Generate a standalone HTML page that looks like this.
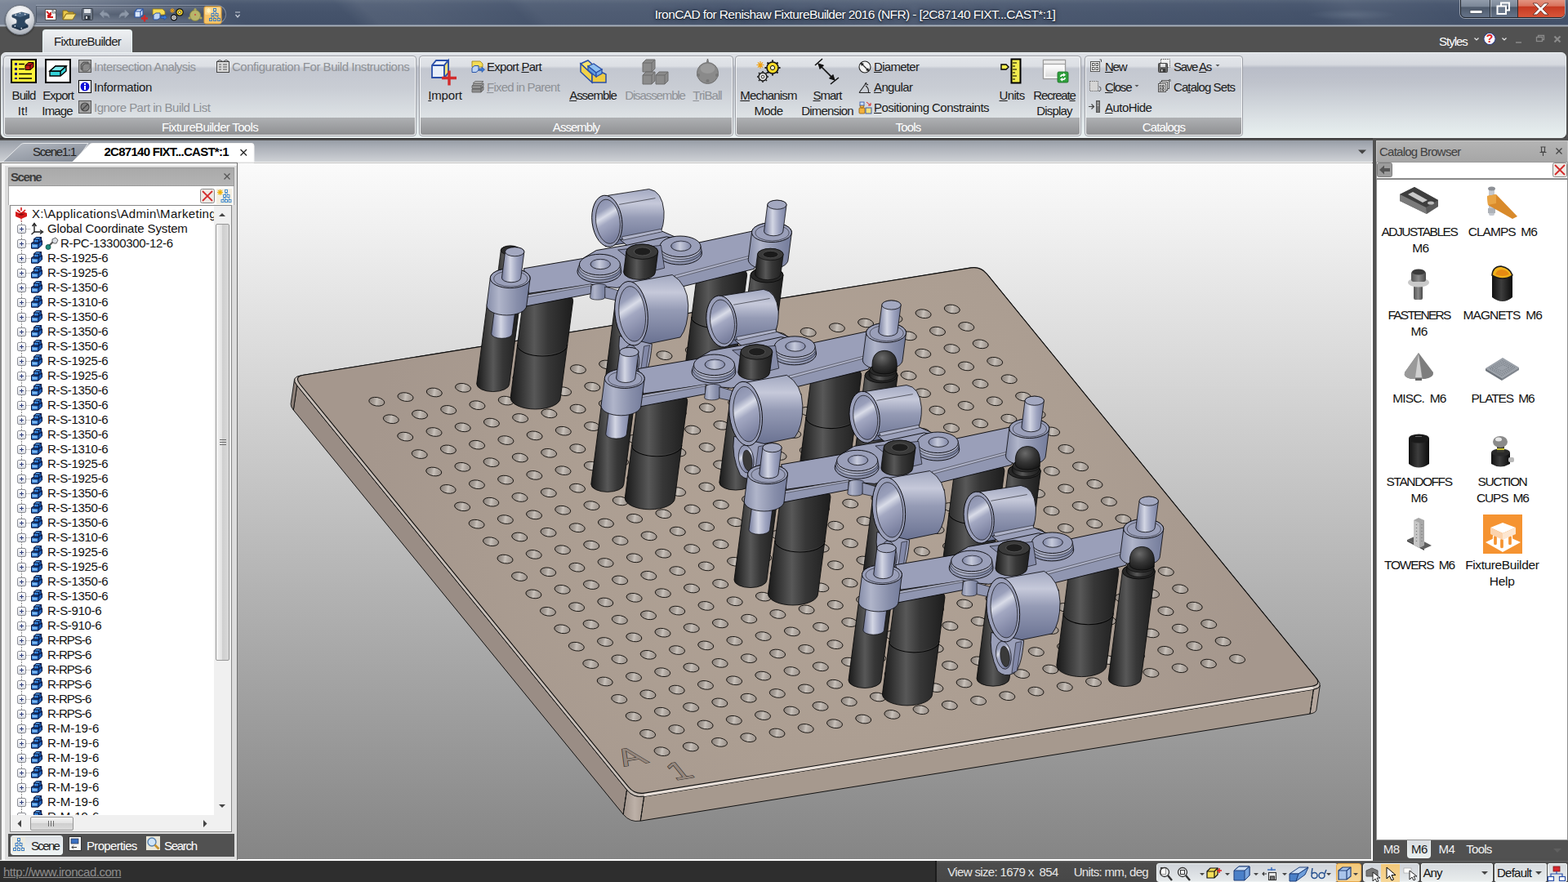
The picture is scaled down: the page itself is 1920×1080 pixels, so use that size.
<!DOCTYPE html>
<html lang="en"><head><meta charset="utf-8"><title>IronCAD for Renishaw FixtureBuilder 2016 (NFR) - [2C87140 FIXT...CAST*:1]</title>
<style>
*{box-sizing:border-box;margin:0;padding:0}
html,body{width:1920px;height:1080px;overflow:hidden}
body{position:relative;background:#505050;font-family:"Liberation Sans",sans-serif;font-size:15px;color:#1a1a1a;letter-spacing:-0.45px}
.abs{position:absolute}
svg{position:absolute;overflow:visible}
svg text{font-family:"Liberation Sans",sans-serif}
/* title */
#title{left:0;top:0;width:1920px;height:33px;background:linear-gradient(180deg,#566479 0,#4a5870 5px,#45536b 16px,#425068 30px,#9aa4b2 31px,#b9c0ca 32px,#3e3e3e 33px)}
#titleglow{left:0;top:0;width:1920px;height:31px;background:linear-gradient(45deg,rgba(255,255,255,0.3) 0.0%,rgba(255,255,255,0.22) 6.2%,rgba(255,255,255,0) 15.6%,rgba(255,255,255,0) 22.4%,rgba(255,255,255,0.075) 23.9%,rgba(255,255,255,0.07) 27.1%,rgba(255,255,255,0.02) 33.3%,rgba(255,255,255,0.06) 34.5%,rgba(255,255,255,0.05) 41.7%,rgba(255,255,255,0.02) 46.9%,rgba(255,255,255,0.07) 57.3%,rgba(255,255,255,0.03) 67.7%,rgba(255,255,255,0) 83.3%,rgba(255,255,255,0.05) 85.9%,rgba(255,255,255,0) 91.7%,rgba(255,255,255,0) 100.0%)}
#ttext{left:700px;top:9px;width:694px;text-align:center;color:#fff;font-size:15.5px;letter-spacing:-0.35px;text-shadow:0 0 3px rgba(20,30,45,.9),0 0 6px rgba(20,30,45,.7),0 1px 1px rgba(0,0,0,.6);white-space:nowrap}
#qat{left:44px;top:6px;width:233px;height:23px;border-radius:0 12px 12px 0;background:linear-gradient(180deg,rgba(255,255,255,.10),rgba(40,50,65,.25) 50%,rgba(255,255,255,.08));border:1px solid rgba(190,200,215,.45);border-left:none;box-shadow:inset 0 0 0 1px rgba(50,60,75,.5)}
#orb{z-index:5;left:6px;top:6px;width:37px;height:37px;border-radius:50%;background:radial-gradient(circle at 50% 30%,#fff 0,#e9ebee 35%,#b9bec6 70%,#8d949e 100%);border:1px solid #6f7680;box-shadow:0 1px 2px rgba(0,0,0,.5)}
/* tab row */
#tabrow{left:0;top:33px;width:1920px;height:32px;background:#515151}
#rtab{left:52px;top:36px;width:110px;height:29px;border-radius:4px 4px 0 0;background:linear-gradient(180deg,#eef0f2,#dfe2e6 60%,#d5d9de);border:1px solid #e8f4f4;border-bottom:none;text-align:center;line-height:27px;font-size:15px;color:#1c1c1c}
/* ribbon */
#ribbon{left:1px;top:64px;width:1917px;height:105px;border-radius:6px;background:linear-gradient(180deg,#dfe2e7 0,#d6d9df 14px,#b9bdc8 18px,#bfc3cc 35%,#dde3e6 80%,#e8f0f0 100%);border:1px solid #eef3f4;box-shadow:0 2px 0 #3b3b3b}
.grp{top:68px;height:99px;border-radius:4px;border:1px solid #9b9ea5;box-shadow:inset 0 0 0 1px rgba(255,255,255,.75);background:linear-gradient(180deg,#e3e6ea 0,#dcdfe4 12px,#c3c7d0 15px,#c9cdd4 40%,#dfe4e7 78px,#dfe4e7 78px)}
.grp .lbl{position:absolute;left:1px;right:1px;bottom:1px;height:21px;border-radius:0 0 3px 3px;background:linear-gradient(180deg,#aeb0b3,#8f9092);color:#fff;text-align:center;line-height:23px;font-size:15px;letter-spacing:-0.4px}
.rt{position:absolute;white-space:nowrap;font-size:15px;line-height:18px;color:#1a1a1a}
.rt.dis{color:#8e9196}
.rt.c{text-align:center;transform:translateX(-50%)}
u{text-decoration:underline;text-underline-offset:1px}
.ico{position:absolute}
</style></head><body>

<svg id="scene" style="left:0;top:0" width="1920" height="1080" viewBox="0 0 1920 1080">
<defs>
<clipPath id="vpclip"><rect x="0" y="199" width="1680" height="854"/></clipPath>
<linearGradient id="gbg" x1="0" y1="0" x2="0" y2="1"><stop offset="0" stop-color="#fbfbfb"/><stop offset="1" stop-color="#858585"/></linearGradient>
<linearGradient id="ghole" x1="0" y1="0" x2="1" y2="0"><stop offset="0" stop-color="#9a9088"/><stop offset=".33" stop-color="#b3aba4"/><stop offset=".5" stop-color="#c8c1ba"/><stop offset=".66" stop-color="#aaa29b"/><stop offset="1" stop-color="#8a817a"/></linearGradient><radialGradient id="gplate" gradientUnits="userSpaceOnUse" cx="1010" cy="610" r="560"><stop offset="0" stop-color="#b2a396"/><stop offset=".55" stop-color="#ac9e92"/><stop offset="1" stop-color="#a5978d"/></radialGradient>
<linearGradient id="gblack" x1="0" y1="0" x2="1" y2="0"><stop offset="0" stop-color="#191919"/><stop offset=".1" stop-color="#292929"/><stop offset=".38" stop-color="#585858"/><stop offset=".6" stop-color="#373737"/><stop offset="1" stop-color="#1d1d1d"/></linearGradient>
<linearGradient id="gpin" x1="0" y1="0" x2="1" y2="0"><stop offset="0" stop-color="#737a9b"/><stop offset=".38" stop-color="#d3d6e4"/><stop offset=".68" stop-color="#9da3bf"/><stop offset="1" stop-color="#79809f"/></linearGradient>
<linearGradient id="gboss" x1="0" y1="0" x2="1" y2="0"><stop offset="0" stop-color="#858ca8"/><stop offset=".28" stop-color="#b0b5ca"/><stop offset=".7" stop-color="#878eaa"/><stop offset="1" stop-color="#737b9a"/></linearGradient><linearGradient id="ghole2" x1="0" y1="0" x2="1" y2="0"><stop offset="0" stop-color="#7c83a2"/><stop offset=".45" stop-color="#c6cadb"/><stop offset="1" stop-color="#8288a7"/></linearGradient>
<linearGradient id="gtube" x1="0" y1="0" x2="0" y2="1"><stop offset="0" stop-color="#a2a8c0"/><stop offset=".25" stop-color="#c6c9da"/><stop offset=".5" stop-color="#959bb5"/><stop offset="1" stop-color="#687090"/></linearGradient>
<linearGradient id="gbore" x1="0" y1="0" x2=".25" y2="1"><stop offset="0" stop-color="#848aa8"/><stop offset=".3" stop-color="#9aa0bb"/><stop offset=".45" stop-color="#d9dce8"/><stop offset=".6" stop-color="#a3a8c2"/><stop offset="1" stop-color="#7b81a0"/></linearGradient>
<radialGradient id="gball" cx=".4" cy=".3" r=".8"><stop offset="0" stop-color="#6a6a6a"/><stop offset=".5" stop-color="#353535"/><stop offset="1" stop-color="#141414"/></radialGradient>
</defs>
<g clip-path="url(#vpclip)">
<rect x="0" y="199" width="1680" height="854" fill="url(#gbg)"/>
<path d="M363.7 472.0 L767.6 967.2 L763.2 997.2 L359.3 502.0Z" fill="#9a8d85" stroke="#111" stroke-width="1"/>
<path d="M360.5 464.7 Q360.1 467.6 363.7 472.0 L359.3 502.0 Q355.7 497.6 356.1 494.7Z" fill="#8c7f78" stroke="#111" stroke-width=".9"/>
<path d="M788.6 975.2 L1608.5 844.1 L1604.1 874.1 L784.2 1005.2Z" fill="#a6998e" stroke="#111" stroke-width="1"/>
<defs><linearGradient id="gcorner" x1="0" y1="0" x2="1" y2="0"><stop offset="0" stop-color="#9d9088"/><stop offset=".55" stop-color="#bdb1a8"/><stop offset="1" stop-color="#a99c92"/></linearGradient></defs>
<path d="M767.6 967.2 Q775.8 977.3 788.6 975.2 L784.2 1005.2 Q771.4 1007.3 763.2 997.2Z" fill="url(#gcorner)" stroke="#111" stroke-width=".9"/>
<path d="M1608.5 844.1 Q1615.8 842.9 1616.3 839.2 L1611.9 869.2 Q1611.4 872.9 1604.1 874.1Z" fill="#b3a69d" stroke="#111" stroke-width=".9"/>
<path d="M363.7 472.0 Q355.4 461.9 368.3 459.8 L1188.0 328.1 Q1200.8 326.0 1209.0 336.1 L1613.1 831.9 Q1621.3 842.0 1608.5 844.1 L788.6 975.2 Q775.8 977.3 767.6 967.2Z" fill="#c8bfb8" stroke="#111" stroke-width="1"/>
<path d="M789.0 971.1 L1606.6 840.3 L1608.5 844.1 L788.6 975.2Z" fill="#e8dfd8"/>
<path d="M767.6 967.2 L763.2 997.2 M788.6 975.2 L784.2 1005.2 M1608.5 844.1 L1604.1 874.1" stroke="#111" stroke-width=".9" stroke-dasharray="3 1.5" fill="none"/>
<path d="M367.4 470.5 Q359.8 461.2 371.6 459.3 L1189.0 327.9 Q1200.8 326.0 1208.4 335.3 L1610.8 829.1 Q1618.4 838.4 1606.6 840.3 L789.0 971.1 Q777.2 973.0 769.6 963.7Z" fill="url(#gplate)" stroke="#0c0c0c" stroke-width="1.1"/>
<defs><ellipse id="h" rx="9.60" ry="5.21" transform="rotate(-170.84)" fill="url(#ghole)" stroke="#15120f" stroke-width=".9"/></defs>
<use href="#h" x="461.3" y="491.8"/><use href="#h" x="478.8" y="513.2"/><use href="#h" x="496.2" y="534.6"/><use href="#h" x="513.7" y="556.1"/><use href="#h" x="531.2" y="577.5"/><use href="#h" x="548.6" y="598.9"/><use href="#h" x="566.1" y="620.3"/><use href="#h" x="583.6" y="641.7"/><use href="#h" x="601.0" y="663.2"/><use href="#h" x="618.5" y="684.6"/><use href="#h" x="636.0" y="706.0"/><use href="#h" x="653.4" y="727.4"/><use href="#h" x="670.9" y="748.8"/><use href="#h" x="688.3" y="770.3"/><use href="#h" x="705.8" y="791.7"/><use href="#h" x="723.3" y="813.1"/><use href="#h" x="740.7" y="834.5"/><use href="#h" x="758.2" y="855.9"/><use href="#h" x="775.7" y="877.4"/><use href="#h" x="793.1" y="898.8"/><use href="#h" x="810.6" y="920.2"/><use href="#h" x="496.5" y="486.1"/><use href="#h" x="514.0" y="507.6"/><use href="#h" x="531.5" y="529.0"/><use href="#h" x="548.9" y="550.4"/><use href="#h" x="566.4" y="571.8"/><use href="#h" x="583.9" y="593.2"/><use href="#h" x="601.3" y="614.7"/><use href="#h" x="618.8" y="636.1"/><use href="#h" x="636.2" y="657.5"/><use href="#h" x="653.7" y="678.9"/><use href="#h" x="671.2" y="700.3"/><use href="#h" x="688.6" y="721.8"/><use href="#h" x="706.1" y="743.2"/><use href="#h" x="723.6" y="764.6"/><use href="#h" x="741.0" y="786.0"/><use href="#h" x="758.5" y="807.4"/><use href="#h" x="776.0" y="828.9"/><use href="#h" x="793.4" y="850.3"/><use href="#h" x="810.9" y="871.7"/><use href="#h" x="828.4" y="893.1"/><use href="#h" x="845.8" y="914.5"/><use href="#h" x="531.8" y="480.5"/><use href="#h" x="549.2" y="501.9"/><use href="#h" x="566.7" y="523.3"/><use href="#h" x="584.1" y="544.7"/><use href="#h" x="601.6" y="566.2"/><use href="#h" x="619.1" y="587.6"/><use href="#h" x="636.5" y="609.0"/><use href="#h" x="654.0" y="630.4"/><use href="#h" x="671.5" y="651.8"/><use href="#h" x="688.9" y="673.2"/><use href="#h" x="706.4" y="694.7"/><use href="#h" x="723.9" y="716.1"/><use href="#h" x="741.3" y="737.5"/><use href="#h" x="758.8" y="758.9"/><use href="#h" x="776.3" y="780.4"/><use href="#h" x="793.7" y="801.8"/><use href="#h" x="811.2" y="823.2"/><use href="#h" x="828.7" y="844.6"/><use href="#h" x="846.1" y="866.0"/><use href="#h" x="863.6" y="887.5"/><use href="#h" x="881.0" y="908.9"/><use href="#h" x="567.0" y="474.8"/><use href="#h" x="584.4" y="496.2"/><use href="#h" x="601.9" y="517.6"/><use href="#h" x="619.4" y="539.1"/><use href="#h" x="636.8" y="560.5"/><use href="#h" x="654.3" y="581.9"/><use href="#h" x="671.8" y="603.3"/><use href="#h" x="689.2" y="624.7"/><use href="#h" x="706.7" y="646.2"/><use href="#h" x="724.2" y="667.6"/><use href="#h" x="741.6" y="689.0"/><use href="#h" x="759.1" y="710.4"/><use href="#h" x="776.6" y="731.8"/><use href="#h" x="794.0" y="753.3"/><use href="#h" x="811.5" y="774.7"/><use href="#h" x="829.0" y="796.1"/><use href="#h" x="846.4" y="817.5"/><use href="#h" x="863.9" y="838.9"/><use href="#h" x="881.3" y="860.4"/><use href="#h" x="898.8" y="881.8"/><use href="#h" x="916.3" y="903.2"/><use href="#h" x="602.2" y="469.1"/><use href="#h" x="619.7" y="490.6"/><use href="#h" x="637.1" y="512.0"/><use href="#h" x="654.6" y="533.4"/><use href="#h" x="672.1" y="554.8"/><use href="#h" x="689.5" y="576.2"/><use href="#h" x="707.0" y="597.7"/><use href="#h" x="724.5" y="619.1"/><use href="#h" x="741.9" y="640.5"/><use href="#h" x="759.4" y="661.9"/><use href="#h" x="776.9" y="683.3"/><use href="#h" x="794.3" y="704.8"/><use href="#h" x="811.8" y="726.2"/><use href="#h" x="829.2" y="747.6"/><use href="#h" x="846.7" y="769.0"/><use href="#h" x="864.2" y="790.4"/><use href="#h" x="881.6" y="811.9"/><use href="#h" x="899.1" y="833.3"/><use href="#h" x="916.6" y="854.7"/><use href="#h" x="934.0" y="876.1"/><use href="#h" x="951.5" y="897.5"/><use href="#h" x="637.4" y="463.5"/><use href="#h" x="654.9" y="484.9"/><use href="#h" x="672.4" y="506.3"/><use href="#h" x="689.8" y="527.7"/><use href="#h" x="707.3" y="549.2"/><use href="#h" x="724.8" y="570.6"/><use href="#h" x="742.2" y="592.0"/><use href="#h" x="759.7" y="613.4"/><use href="#h" x="777.1" y="634.8"/><use href="#h" x="794.6" y="656.3"/><use href="#h" x="812.1" y="677.7"/><use href="#h" x="829.5" y="699.1"/><use href="#h" x="847.0" y="720.5"/><use href="#h" x="864.5" y="741.9"/><use href="#h" x="881.9" y="763.4"/><use href="#h" x="899.4" y="784.8"/><use href="#h" x="916.9" y="806.2"/><use href="#h" x="934.3" y="827.6"/><use href="#h" x="951.8" y="849.0"/><use href="#h" x="969.3" y="870.5"/><use href="#h" x="986.7" y="891.9"/><use href="#h" x="672.7" y="457.8"/><use href="#h" x="690.1" y="479.2"/><use href="#h" x="707.6" y="500.6"/><use href="#h" x="725.0" y="522.1"/><use href="#h" x="742.5" y="543.5"/><use href="#h" x="760.0" y="564.9"/><use href="#h" x="777.4" y="586.3"/><use href="#h" x="794.9" y="607.8"/><use href="#h" x="812.4" y="629.2"/><use href="#h" x="829.8" y="650.6"/><use href="#h" x="847.3" y="672.0"/><use href="#h" x="864.8" y="693.4"/><use href="#h" x="882.2" y="714.9"/><use href="#h" x="899.7" y="736.3"/><use href="#h" x="917.2" y="757.7"/><use href="#h" x="934.6" y="779.1"/><use href="#h" x="952.1" y="800.5"/><use href="#h" x="969.6" y="822.0"/><use href="#h" x="987.0" y="843.4"/><use href="#h" x="1004.5" y="864.8"/><use href="#h" x="1022.0" y="886.2"/><use href="#h" x="707.9" y="452.1"/><use href="#h" x="725.3" y="473.6"/><use href="#h" x="742.8" y="495.0"/><use href="#h" x="760.3" y="516.4"/><use href="#h" x="777.7" y="537.8"/><use href="#h" x="795.2" y="559.2"/><use href="#h" x="812.7" y="580.7"/><use href="#h" x="830.1" y="602.1"/><use href="#h" x="847.6" y="623.5"/><use href="#h" x="865.1" y="644.9"/><use href="#h" x="882.5" y="666.3"/><use href="#h" x="900.0" y="687.8"/><use href="#h" x="917.5" y="709.2"/><use href="#h" x="934.9" y="730.6"/><use href="#h" x="952.4" y="752.0"/><use href="#h" x="969.9" y="773.4"/><use href="#h" x="987.3" y="794.9"/><use href="#h" x="1004.8" y="816.3"/><use href="#h" x="1022.2" y="837.7"/><use href="#h" x="1039.7" y="859.1"/><use href="#h" x="1057.2" y="880.5"/><use href="#h" x="743.1" y="446.5"/><use href="#h" x="760.6" y="467.9"/><use href="#h" x="778.0" y="489.3"/><use href="#h" x="795.5" y="510.7"/><use href="#h" x="813.0" y="532.2"/><use href="#h" x="830.4" y="553.6"/><use href="#h" x="847.9" y="575.0"/><use href="#h" x="865.4" y="596.4"/><use href="#h" x="882.8" y="617.8"/><use href="#h" x="900.3" y="639.3"/><use href="#h" x="917.8" y="660.7"/><use href="#h" x="935.2" y="682.1"/><use href="#h" x="952.7" y="703.5"/><use href="#h" x="970.1" y="724.9"/><use href="#h" x="987.6" y="746.4"/><use href="#h" x="1005.1" y="767.8"/><use href="#h" x="1022.5" y="789.2"/><use href="#h" x="1040.0" y="810.6"/><use href="#h" x="1057.5" y="832.0"/><use href="#h" x="1074.9" y="853.5"/><use href="#h" x="1092.4" y="874.9"/><use href="#h" x="778.3" y="440.8"/><use href="#h" x="795.8" y="462.2"/><use href="#h" x="813.3" y="483.7"/><use href="#h" x="830.7" y="505.1"/><use href="#h" x="848.2" y="526.5"/><use href="#h" x="865.7" y="547.9"/><use href="#h" x="883.1" y="569.3"/><use href="#h" x="900.6" y="590.8"/><use href="#h" x="918.0" y="612.2"/><use href="#h" x="935.5" y="633.6"/><use href="#h" x="953.0" y="655.0"/><use href="#h" x="970.4" y="676.4"/><use href="#h" x="987.9" y="697.9"/><use href="#h" x="1005.4" y="719.3"/><use href="#h" x="1022.8" y="740.7"/><use href="#h" x="1040.3" y="762.1"/><use href="#h" x="1057.8" y="783.5"/><use href="#h" x="1075.2" y="805.0"/><use href="#h" x="1092.7" y="826.4"/><use href="#h" x="1110.2" y="847.8"/><use href="#h" x="1127.6" y="869.2"/><use href="#h" x="813.5" y="435.2"/><use href="#h" x="831.0" y="456.6"/><use href="#h" x="848.5" y="478.0"/><use href="#h" x="865.9" y="499.4"/><use href="#h" x="883.4" y="520.8"/><use href="#h" x="900.9" y="542.2"/><use href="#h" x="918.3" y="563.7"/><use href="#h" x="935.8" y="585.1"/><use href="#h" x="953.3" y="606.5"/><use href="#h" x="970.7" y="627.9"/><use href="#h" x="988.2" y="649.4"/><use href="#h" x="1005.7" y="670.8"/><use href="#h" x="1023.1" y="692.2"/><use href="#h" x="1040.6" y="713.6"/><use href="#h" x="1058.1" y="735.0"/><use href="#h" x="1075.5" y="756.5"/><use href="#h" x="1093.0" y="777.9"/><use href="#h" x="1110.5" y="799.3"/><use href="#h" x="1127.9" y="820.7"/><use href="#h" x="1145.4" y="842.1"/><use href="#h" x="1162.8" y="863.6"/><use href="#h" x="848.8" y="429.5"/><use href="#h" x="866.2" y="450.9"/><use href="#h" x="883.7" y="472.3"/><use href="#h" x="901.2" y="493.7"/><use href="#h" x="918.6" y="515.2"/><use href="#h" x="936.1" y="536.6"/><use href="#h" x="953.6" y="558.0"/><use href="#h" x="971.0" y="579.4"/><use href="#h" x="988.5" y="600.8"/><use href="#h" x="1006.0" y="622.3"/><use href="#h" x="1023.4" y="643.7"/><use href="#h" x="1040.9" y="665.1"/><use href="#h" x="1058.4" y="686.5"/><use href="#h" x="1075.8" y="707.9"/><use href="#h" x="1093.3" y="729.4"/><use href="#h" x="1110.8" y="750.8"/><use href="#h" x="1128.2" y="772.2"/><use href="#h" x="1145.7" y="793.6"/><use href="#h" x="1163.1" y="815.0"/><use href="#h" x="1180.6" y="836.5"/><use href="#h" x="1198.1" y="857.9"/><use href="#h" x="884.0" y="423.8"/><use href="#h" x="901.5" y="445.2"/><use href="#h" x="918.9" y="466.7"/><use href="#h" x="936.4" y="488.1"/><use href="#h" x="953.9" y="509.5"/><use href="#h" x="971.3" y="530.9"/><use href="#h" x="988.8" y="552.3"/><use href="#h" x="1006.3" y="573.8"/><use href="#h" x="1023.7" y="595.2"/><use href="#h" x="1041.2" y="616.6"/><use href="#h" x="1058.7" y="638.0"/><use href="#h" x="1076.1" y="659.4"/><use href="#h" x="1093.6" y="680.9"/><use href="#h" x="1111.0" y="702.3"/><use href="#h" x="1128.5" y="723.7"/><use href="#h" x="1146.0" y="745.1"/><use href="#h" x="1163.4" y="766.5"/><use href="#h" x="1180.9" y="788.0"/><use href="#h" x="1198.4" y="809.4"/><use href="#h" x="1215.8" y="830.8"/><use href="#h" x="1233.3" y="852.2"/><use href="#h" x="919.2" y="418.2"/><use href="#h" x="936.7" y="439.6"/><use href="#h" x="954.2" y="461.0"/><use href="#h" x="971.6" y="482.4"/><use href="#h" x="989.1" y="503.8"/><use href="#h" x="1006.6" y="525.3"/><use href="#h" x="1024.0" y="546.7"/><use href="#h" x="1041.5" y="568.1"/><use href="#h" x="1058.9" y="589.5"/><use href="#h" x="1076.4" y="610.9"/><use href="#h" x="1093.9" y="632.4"/><use href="#h" x="1111.3" y="653.8"/><use href="#h" x="1128.8" y="675.2"/><use href="#h" x="1146.3" y="696.6"/><use href="#h" x="1163.7" y="718.0"/><use href="#h" x="1181.2" y="739.5"/><use href="#h" x="1198.7" y="760.9"/><use href="#h" x="1216.1" y="782.3"/><use href="#h" x="1233.6" y="803.7"/><use href="#h" x="1251.1" y="825.1"/><use href="#h" x="1268.5" y="846.6"/><use href="#h" x="954.5" y="412.5"/><use href="#h" x="971.9" y="433.9"/><use href="#h" x="989.4" y="455.3"/><use href="#h" x="1006.8" y="476.8"/><use href="#h" x="1024.3" y="498.2"/><use href="#h" x="1041.8" y="519.6"/><use href="#h" x="1059.2" y="541.0"/><use href="#h" x="1076.7" y="562.4"/><use href="#h" x="1094.2" y="583.9"/><use href="#h" x="1111.6" y="605.3"/><use href="#h" x="1129.1" y="626.7"/><use href="#h" x="1146.6" y="648.1"/><use href="#h" x="1164.0" y="669.5"/><use href="#h" x="1181.5" y="691.0"/><use href="#h" x="1199.0" y="712.4"/><use href="#h" x="1216.4" y="733.8"/><use href="#h" x="1233.9" y="755.2"/><use href="#h" x="1251.4" y="776.6"/><use href="#h" x="1268.8" y="798.1"/><use href="#h" x="1286.3" y="819.5"/><use href="#h" x="1303.8" y="840.9"/><use href="#h" x="989.7" y="406.8"/><use href="#h" x="1007.1" y="428.2"/><use href="#h" x="1024.6" y="449.7"/><use href="#h" x="1042.1" y="471.1"/><use href="#h" x="1059.5" y="492.5"/><use href="#h" x="1077.0" y="513.9"/><use href="#h" x="1094.5" y="535.3"/><use href="#h" x="1111.9" y="556.8"/><use href="#h" x="1129.4" y="578.2"/><use href="#h" x="1146.9" y="599.6"/><use href="#h" x="1164.3" y="621.0"/><use href="#h" x="1181.8" y="642.4"/><use href="#h" x="1199.3" y="663.9"/><use href="#h" x="1216.7" y="685.3"/><use href="#h" x="1234.2" y="706.7"/><use href="#h" x="1251.7" y="728.1"/><use href="#h" x="1269.1" y="749.5"/><use href="#h" x="1286.6" y="771.0"/><use href="#h" x="1304.0" y="792.4"/><use href="#h" x="1321.5" y="813.8"/><use href="#h" x="1339.0" y="835.2"/><use href="#h" x="1024.9" y="401.2"/><use href="#h" x="1042.4" y="422.6"/><use href="#h" x="1059.8" y="444.0"/><use href="#h" x="1077.3" y="465.4"/><use href="#h" x="1094.8" y="486.8"/><use href="#h" x="1112.2" y="508.3"/><use href="#h" x="1129.7" y="529.7"/><use href="#h" x="1147.2" y="551.1"/><use href="#h" x="1164.6" y="572.5"/><use href="#h" x="1182.1" y="593.9"/><use href="#h" x="1199.6" y="615.4"/><use href="#h" x="1217.0" y="636.8"/><use href="#h" x="1234.5" y="658.2"/><use href="#h" x="1251.9" y="679.6"/><use href="#h" x="1269.4" y="701.0"/><use href="#h" x="1286.9" y="722.5"/><use href="#h" x="1304.3" y="743.9"/><use href="#h" x="1321.8" y="765.3"/><use href="#h" x="1339.3" y="786.7"/><use href="#h" x="1356.7" y="808.1"/><use href="#h" x="1374.2" y="829.6"/><use href="#h" x="1060.1" y="395.5"/><use href="#h" x="1077.6" y="416.9"/><use href="#h" x="1095.1" y="438.3"/><use href="#h" x="1112.5" y="459.8"/><use href="#h" x="1130.0" y="481.2"/><use href="#h" x="1147.5" y="502.6"/><use href="#h" x="1164.9" y="524.0"/><use href="#h" x="1182.4" y="545.4"/><use href="#h" x="1199.8" y="566.9"/><use href="#h" x="1217.3" y="588.3"/><use href="#h" x="1234.8" y="609.7"/><use href="#h" x="1252.2" y="631.1"/><use href="#h" x="1269.7" y="652.5"/><use href="#h" x="1287.2" y="674.0"/><use href="#h" x="1304.6" y="695.4"/><use href="#h" x="1322.1" y="716.8"/><use href="#h" x="1339.6" y="738.2"/><use href="#h" x="1357.0" y="759.6"/><use href="#h" x="1374.5" y="781.1"/><use href="#h" x="1392.0" y="802.5"/><use href="#h" x="1409.4" y="823.9"/><use href="#h" x="1095.4" y="389.8"/><use href="#h" x="1112.8" y="411.3"/><use href="#h" x="1130.3" y="432.7"/><use href="#h" x="1147.7" y="454.1"/><use href="#h" x="1165.2" y="475.5"/><use href="#h" x="1182.7" y="496.9"/><use href="#h" x="1200.1" y="518.4"/><use href="#h" x="1217.6" y="539.8"/><use href="#h" x="1235.1" y="561.2"/><use href="#h" x="1252.5" y="582.6"/><use href="#h" x="1270.0" y="604.0"/><use href="#h" x="1287.5" y="625.5"/><use href="#h" x="1304.9" y="646.9"/><use href="#h" x="1322.4" y="668.3"/><use href="#h" x="1339.9" y="689.7"/><use href="#h" x="1357.3" y="711.1"/><use href="#h" x="1374.8" y="732.6"/><use href="#h" x="1392.3" y="754.0"/><use href="#h" x="1409.7" y="775.4"/><use href="#h" x="1427.2" y="796.8"/><use href="#h" x="1444.7" y="818.2"/><use href="#h" x="1130.6" y="384.2"/><use href="#h" x="1148.0" y="405.6"/><use href="#h" x="1165.5" y="427.0"/><use href="#h" x="1183.0" y="448.4"/><use href="#h" x="1200.4" y="469.8"/><use href="#h" x="1217.9" y="491.3"/><use href="#h" x="1235.4" y="512.7"/><use href="#h" x="1252.8" y="534.1"/><use href="#h" x="1270.3" y="555.5"/><use href="#h" x="1287.8" y="576.9"/><use href="#h" x="1305.2" y="598.4"/><use href="#h" x="1322.7" y="619.8"/><use href="#h" x="1340.2" y="641.2"/><use href="#h" x="1357.6" y="662.6"/><use href="#h" x="1375.1" y="684.0"/><use href="#h" x="1392.6" y="705.5"/><use href="#h" x="1410.0" y="726.9"/><use href="#h" x="1427.5" y="748.3"/><use href="#h" x="1444.9" y="769.7"/><use href="#h" x="1462.4" y="791.1"/><use href="#h" x="1479.9" y="812.6"/><use href="#h" x="1165.8" y="378.5"/><use href="#h" x="1183.3" y="399.9"/><use href="#h" x="1200.7" y="421.3"/><use href="#h" x="1218.2" y="442.8"/><use href="#h" x="1235.7" y="464.2"/><use href="#h" x="1253.1" y="485.6"/><use href="#h" x="1270.6" y="507.0"/><use href="#h" x="1288.1" y="528.4"/><use href="#h" x="1305.5" y="549.9"/><use href="#h" x="1323.0" y="571.3"/><use href="#h" x="1340.5" y="592.7"/><use href="#h" x="1357.9" y="614.1"/><use href="#h" x="1375.4" y="635.5"/><use href="#h" x="1392.8" y="657.0"/><use href="#h" x="1410.3" y="678.4"/><use href="#h" x="1427.8" y="699.8"/><use href="#h" x="1445.2" y="721.2"/><use href="#h" x="1462.7" y="742.6"/><use href="#h" x="1480.2" y="764.1"/><use href="#h" x="1497.6" y="785.5"/><use href="#h" x="1515.1" y="806.9"/>
<g font-family="Liberation Sans, sans-serif" font-size="13" fill="#94877e" stroke="#2e2722" stroke-width=".38" paint-order="stroke"><text transform="matrix(3.5225,-0.5665,1.7465,2.142,764.5,938.6)">A</text><text transform="matrix(3.5225,-0.5665,1.7465,2.142,826.5,955.6)">1</text></g>
<g transform="translate(574.7,217.1) scale(0.27778)"><path d="M108.0 560.0 A42 20 0 0 0 192.0 560.0 L222.9 322.0 A42 20 0 0 0 138.9 322.0Z" fill="url(#gblack)" stroke="#0a0a0a" stroke-width="2.6" stroke-linejoin="round"/><ellipse cx="180.9" cy="322.0" rx="42" ry="20" fill="#2a2a2a" stroke="#0a0a0a" stroke-width="2.6"/><path d="M597.6 903.6 A72 33 0 0 0 741.6 903.6 L788.9 540.0 A72 33 0 0 0 644.9 540.0Z" fill="url(#gblack)" stroke="#0a0a0a" stroke-width="3.2" stroke-linejoin="round"/><path d="M949.8 845.0 A110 50 0 0 0 1169.8 845.0 L1223.8 430.0 A110 50 0 0 0 1003.8 430.0Z" fill="url(#gblack)" stroke="#0a0a0a" stroke-width="3.2" stroke-linejoin="round"/><path d="M979.7 615.0 A110 50 0 0 0 1199.7 615.0" fill="none" stroke="#050505" stroke-width="4.2"/><path d="M981.7 621.0 A110 50 0 0 0 1197.7 621.0" fill="none" stroke="#5a5a5a" stroke-width="1.9" opacity=".7"/><path d="M32.4 910.8 A72 34 0 0 0 176.4 910.8 L223.3 550.0 A72 34 0 0 0 79.3 550.0Z" fill="url(#gblack)" stroke="#0a0a0a" stroke-width="3.2" stroke-linejoin="round"/><path d="M181.6 972.0 A110 50 0 0 0 401.6 972.0 L457.1 545.0 A110 50 0 0 0 237.1 545.0Z" fill="url(#gblack)" stroke="#0a0a0a" stroke-width="3.2" stroke-linejoin="round"/><path d="M212.0 738.0 A110 50 0 0 0 432.0 738.0" fill="none" stroke="#050505" stroke-width="4.2"/><path d="M214.0 744.0 A110 50 0 0 0 430.0 744.0" fill="none" stroke="#5a5a5a" stroke-width="1.9" opacity=".7"/><path d="M97.0 690.0 A46 20 0 0 0 189.0 690.0 L205.9 560.0 A46 20 0 0 0 113.9 560.0Z" fill="url(#gpin)" stroke="#08080c" stroke-width="2.6" stroke-linejoin="round"/><path d="M612 80 L792 52 Q850 60 858 150 Q860 215 838 250 L690 290 L600 305Z" fill="url(#gtube)" stroke="#08080c" stroke-width="3"/><ellipse cx="607" cy="193" rx="66" ry="114" fill="#9a9fb9" stroke="#08080c" stroke-width="3.4" transform="rotate(-7 607 193)"/><ellipse cx="611" cy="195" rx="53" ry="98" fill="url(#gbore)" stroke="#08080c" stroke-width="2.4" transform="rotate(-7 611 195)"/><path d="M660 120 L820 92" stroke="#08080c" stroke-width="2" fill="none"/><path d="M665 275 L850 238 L905 262 L700 305Z" fill="#9a9fb9" stroke="#08080c" stroke-width="3.4" stroke-linejoin="round"/><path d="M672 262 L845 228 L850 240 L678 277Z" fill="#aeb2c8" stroke="#08080c" stroke-width="2" stroke-linejoin="round"/><path d="M240 402 L500 358 L560 322 L700 298 L870 262 L1010 288 L1255 236 L1300 342 L905 437 L650 487 L598 482 L537 472 L262 512Z" fill="#9a9fb9" stroke="#08080c" stroke-width="3.4" stroke-linejoin="round"/><path d="M215 528 L537 474 L537 513 L211 576Z" fill="#9096b1" stroke="#08080c" stroke-width="3.4" stroke-linejoin="round"/><path d="M222 524 L537 470 L537 478 L222 534Z" fill="#aeb2c8" stroke="#08080c" stroke-width="1.6" stroke-linejoin="round"/><path d="M905 437 L1280 340 L1255 404 L942 481Z" fill="#9096b1" stroke="#08080c" stroke-width="3.4" stroke-linejoin="round"/><path d="M905 433 L1285 333 L1283 343 L908 444Z" fill="#aeb2c8" stroke="#08080c" stroke-width="1.6" stroke-linejoin="round"/><path d="M532.0 530.0 A33 10 0 0 0 598.0 530.0 L604.5 480.0 A33 10 0 0 0 538.5 480.0Z" fill="url(#gboss)" stroke="#08080c" stroke-width="2.4" stroke-linejoin="round"/><path d="M598 482 L660 500 L660 545 L598 532Z" fill="#9096b1" stroke="#08080c" stroke-width="2.4" stroke-linejoin="round"/><path d="M76.4 565.0 A88 43 0 0 0 252.4 565.0 L268.0 445.0 A88 43 0 0 0 92.0 445.0Z" fill="url(#gboss)" stroke="#08080c" stroke-width="3" stroke-linejoin="round"/><ellipse cx="180" cy="445" rx="88" ry="43" fill="#9a9fb9" stroke="#08080c" stroke-width="3.4"/><ellipse cx="182" cy="447" rx="74" ry="35" fill="none" stroke="#08080c" stroke-width="1.8"/><path d="M1229.4 363.0 A88 43 0 0 0 1405.4 363.0 L1421.0 243.0 A88 43 0 0 0 1245.0 243.0Z" fill="url(#gboss)" stroke="#08080c" stroke-width="3" stroke-linejoin="round"/><ellipse cx="1333" cy="243" rx="88" ry="43" fill="#9a9fb9" stroke="#08080c" stroke-width="3.4"/><ellipse cx="1335" cy="245" rx="74" ry="35" fill="none" stroke="#08080c" stroke-width="1.8"/><path d="M143.0 443.0 A42 20 0 0 0 227.0 443.0 L241.9 328.0 A42 20 0 0 0 157.9 328.0Z" fill="url(#gpin)" stroke="#08080c" stroke-width="2.8" stroke-linejoin="round"/><ellipse cx="199.9" cy="328.0" rx="42" ry="20" fill="#a3a8c0" stroke="#08080c" stroke-width="2.8"/><path d="M1299.0 238.0 A42 20 0 0 0 1383.0 238.0 L1398.2 121.0 A42 20 0 0 0 1314.2 121.0Z" fill="url(#gpin)" stroke="#08080c" stroke-width="2.8" stroke-linejoin="round"/><ellipse cx="1356.2" cy="121.0" rx="42" ry="20" fill="#a3a8c0" stroke="#08080c" stroke-width="2.8"/><ellipse cx="573" cy="415" rx="97" ry="50" fill="#9096b1" stroke="#08080c" stroke-width="3.4"/><ellipse cx="574" cy="404" rx="95" ry="49" fill="url(#gboss)" stroke="#08080c" stroke-width="2.2"/><ellipse cx="575" cy="394" rx="92" ry="47" fill="#aeb2c8" stroke="#08080c" stroke-width="2.2"/><ellipse cx="575" cy="385" rx="90" ry="46" fill="#9a9fb9" stroke="#08080c" stroke-width="3.4"/><ellipse cx="578" cy="383" rx="44" ry="22" fill="url(#ghole2)" stroke="#08080c" stroke-width="2.8"/><path d="M534 383 A44 22 0 0 1 622 383 A44 17 0 0 0 534 383Z" fill="#7b82a3" opacity=".55"/><ellipse cx="928" cy="335" rx="97" ry="50" fill="#9096b1" stroke="#08080c" stroke-width="3.4"/><ellipse cx="929" cy="324" rx="95" ry="49" fill="url(#gboss)" stroke="#08080c" stroke-width="2.2"/><ellipse cx="930" cy="314" rx="92" ry="47" fill="#aeb2c8" stroke="#08080c" stroke-width="2.2"/><ellipse cx="930" cy="305" rx="90" ry="46" fill="#9a9fb9" stroke="#08080c" stroke-width="3.4"/><ellipse cx="933" cy="303" rx="44" ry="22" fill="url(#ghole2)" stroke="#08080c" stroke-width="2.8"/><path d="M889 303 A44 22 0 0 1 977 303 A44 17 0 0 0 889 303Z" fill="#7b82a3" opacity=".55"/><path d="M655 320 L845 300 L860 400 L780 420Z" fill="#858ba8" stroke="#08080c" stroke-width="2.4"/><path d="M680.0 418.0 A70 33 0 0 0 820.0 418.0 L831.7 328.0 A70 33 0 0 0 691.7 328.0Z" fill="url(#gblack)" stroke="#0a0a0a" stroke-width="3" stroke-linejoin="round"/><ellipse cx="761.7" cy="328.0" rx="70" ry="33" fill="#3a3a3a" stroke="#0a0a0a" stroke-width="3"/><ellipse cx="763" cy="327" rx="37" ry="18" fill="#1e1e1e" stroke="#606060" stroke-width="2.4"/><path d="M715 462 L895 430 Q962 470 965 565 Q965 660 930 705 L760 740Z" fill="url(#gtube)" stroke="#08080c" stroke-width="3"/><path d="M662 700 Q650 790 690 870 Q720 900 760 880 Q795 860 805 735Z" fill="#9a9fb9" stroke="#08080c" stroke-width="3"/><path d="M770 745 L795 740 L775 870 L752 880Z" fill="#8288a7" stroke="#08080c" stroke-width="2"/><ellipse cx="716" cy="800" rx="33" ry="62" fill="url(#gbore)" stroke="#08080c" stroke-width="2.4" transform="rotate(-8 716 800)"/><ellipse cx="722" cy="806" rx="20" ry="46" fill="#3a3a3a" stroke="#08080c" stroke-width="2" transform="rotate(-8 722 806)"/><ellipse cx="714" cy="600" rx="72" ry="142" fill="#9a9fb9" stroke="#08080c" stroke-width="3.4" transform="rotate(-6 714 600)"/><ellipse cx="718" cy="602" rx="58" ry="122" fill="url(#gbore)" stroke="#08080c" stroke-width="2.4" transform="rotate(-6 718 602)"/><path d="M1178.0 905.0 A72 33 0 0 0 1322.0 905.0 L1383.6 431.0 A72 33 0 0 0 1239.6 431.0Z" fill="url(#gblack)" stroke="#0a0a0a" stroke-width="3.2" stroke-linejoin="round"/><ellipse cx="1311.6" cy="431.0" rx="72" ry="33" fill="#262626" stroke="#0a0a0a" stroke-width="3.2"/><path d="M1259.0 426.0 A57 26 0 0 0 1373.0 426.0 L1384.2 340.0 A57 26 0 0 0 1270.2 340.0Z" fill="url(#gblack)" stroke="#0a0a0a" stroke-width="2.5" stroke-linejoin="round"/><ellipse cx="1327.2" cy="340.0" rx="57" ry="26" fill="#3a3a3a" stroke="#0a0a0a" stroke-width="2.5"/><ellipse cx="1328" cy="340" rx="34" ry="15" fill="#1a1a1a" stroke="#555" stroke-width="2.5"/></g>
<g transform="translate(714.8,339.9) scale(0.27778)"><path d="M597.6 903.6 A72 33 0 0 0 741.6 903.6 L788.9 540.0 A72 33 0 0 0 644.9 540.0Z" fill="url(#gblack)" stroke="#0a0a0a" stroke-width="3.2" stroke-linejoin="round"/><path d="M949.8 845.0 A110 50 0 0 0 1169.8 845.0 L1223.8 430.0 A110 50 0 0 0 1003.8 430.0Z" fill="url(#gblack)" stroke="#0a0a0a" stroke-width="3.2" stroke-linejoin="round"/><path d="M979.7 615.0 A110 50 0 0 0 1199.7 615.0" fill="none" stroke="#050505" stroke-width="4.2"/><path d="M981.7 621.0 A110 50 0 0 0 1197.7 621.0" fill="none" stroke="#5a5a5a" stroke-width="1.9" opacity=".7"/><path d="M32.4 910.8 A72 34 0 0 0 176.4 910.8 L223.3 550.0 A72 34 0 0 0 79.3 550.0Z" fill="url(#gblack)" stroke="#0a0a0a" stroke-width="3.2" stroke-linejoin="round"/><path d="M181.6 972.0 A110 50 0 0 0 401.6 972.0 L457.1 545.0 A110 50 0 0 0 237.1 545.0Z" fill="url(#gblack)" stroke="#0a0a0a" stroke-width="3.2" stroke-linejoin="round"/><path d="M212.0 738.0 A110 50 0 0 0 432.0 738.0" fill="none" stroke="#050505" stroke-width="4.2"/><path d="M214.0 744.0 A110 50 0 0 0 430.0 744.0" fill="none" stroke="#5a5a5a" stroke-width="1.9" opacity=".7"/><path d="M97.0 690.0 A46 20 0 0 0 189.0 690.0 L205.9 560.0 A46 20 0 0 0 113.9 560.0Z" fill="url(#gpin)" stroke="#08080c" stroke-width="2.6" stroke-linejoin="round"/><path d="M612 80 L792 52 Q850 60 858 150 Q860 215 838 250 L690 290 L600 305Z" fill="url(#gtube)" stroke="#08080c" stroke-width="3"/><ellipse cx="607" cy="193" rx="66" ry="114" fill="#9a9fb9" stroke="#08080c" stroke-width="3.4" transform="rotate(-7 607 193)"/><ellipse cx="611" cy="195" rx="53" ry="98" fill="url(#gbore)" stroke="#08080c" stroke-width="2.4" transform="rotate(-7 611 195)"/><path d="M660 120 L820 92" stroke="#08080c" stroke-width="2" fill="none"/><path d="M665 275 L850 238 L905 262 L700 305Z" fill="#9a9fb9" stroke="#08080c" stroke-width="3.4" stroke-linejoin="round"/><path d="M672 262 L845 228 L850 240 L678 277Z" fill="#aeb2c8" stroke="#08080c" stroke-width="2" stroke-linejoin="round"/><path d="M240 402 L500 358 L560 322 L700 298 L870 262 L1010 288 L1255 236 L1300 342 L905 437 L650 487 L598 482 L537 472 L262 512Z" fill="#9a9fb9" stroke="#08080c" stroke-width="3.4" stroke-linejoin="round"/><path d="M215 528 L537 474 L537 513 L211 576Z" fill="#9096b1" stroke="#08080c" stroke-width="3.4" stroke-linejoin="round"/><path d="M222 524 L537 470 L537 478 L222 534Z" fill="#aeb2c8" stroke="#08080c" stroke-width="1.6" stroke-linejoin="round"/><path d="M905 437 L1280 340 L1255 404 L942 481Z" fill="#9096b1" stroke="#08080c" stroke-width="3.4" stroke-linejoin="round"/><path d="M905 433 L1285 333 L1283 343 L908 444Z" fill="#aeb2c8" stroke="#08080c" stroke-width="1.6" stroke-linejoin="round"/><path d="M532.0 530.0 A33 10 0 0 0 598.0 530.0 L604.5 480.0 A33 10 0 0 0 538.5 480.0Z" fill="url(#gboss)" stroke="#08080c" stroke-width="2.4" stroke-linejoin="round"/><path d="M598 482 L660 500 L660 545 L598 532Z" fill="#9096b1" stroke="#08080c" stroke-width="2.4" stroke-linejoin="round"/><path d="M76.4 565.0 A88 43 0 0 0 252.4 565.0 L268.0 445.0 A88 43 0 0 0 92.0 445.0Z" fill="url(#gboss)" stroke="#08080c" stroke-width="3" stroke-linejoin="round"/><ellipse cx="180" cy="445" rx="88" ry="43" fill="#9a9fb9" stroke="#08080c" stroke-width="3.4"/><ellipse cx="182" cy="447" rx="74" ry="35" fill="none" stroke="#08080c" stroke-width="1.8"/><path d="M1229.4 363.0 A88 43 0 0 0 1405.4 363.0 L1421.0 243.0 A88 43 0 0 0 1245.0 243.0Z" fill="url(#gboss)" stroke="#08080c" stroke-width="3" stroke-linejoin="round"/><ellipse cx="1333" cy="243" rx="88" ry="43" fill="#9a9fb9" stroke="#08080c" stroke-width="3.4"/><ellipse cx="1335" cy="245" rx="74" ry="35" fill="none" stroke="#08080c" stroke-width="1.8"/><path d="M143.0 443.0 A42 20 0 0 0 227.0 443.0 L241.9 328.0 A42 20 0 0 0 157.9 328.0Z" fill="url(#gpin)" stroke="#08080c" stroke-width="2.8" stroke-linejoin="round"/><ellipse cx="199.9" cy="328.0" rx="42" ry="20" fill="#a3a8c0" stroke="#08080c" stroke-width="2.8"/><path d="M1299.0 238.0 A42 20 0 0 0 1383.0 238.0 L1398.2 121.0 A42 20 0 0 0 1314.2 121.0Z" fill="url(#gpin)" stroke="#08080c" stroke-width="2.8" stroke-linejoin="round"/><ellipse cx="1356.2" cy="121.0" rx="42" ry="20" fill="#a3a8c0" stroke="#08080c" stroke-width="2.8"/><ellipse cx="573" cy="415" rx="97" ry="50" fill="#9096b1" stroke="#08080c" stroke-width="3.4"/><ellipse cx="574" cy="404" rx="95" ry="49" fill="url(#gboss)" stroke="#08080c" stroke-width="2.2"/><ellipse cx="575" cy="394" rx="92" ry="47" fill="#aeb2c8" stroke="#08080c" stroke-width="2.2"/><ellipse cx="575" cy="385" rx="90" ry="46" fill="#9a9fb9" stroke="#08080c" stroke-width="3.4"/><ellipse cx="578" cy="383" rx="44" ry="22" fill="url(#ghole2)" stroke="#08080c" stroke-width="2.8"/><path d="M534 383 A44 22 0 0 1 622 383 A44 17 0 0 0 534 383Z" fill="#7b82a3" opacity=".55"/><ellipse cx="928" cy="335" rx="97" ry="50" fill="#9096b1" stroke="#08080c" stroke-width="3.4"/><ellipse cx="929" cy="324" rx="95" ry="49" fill="url(#gboss)" stroke="#08080c" stroke-width="2.2"/><ellipse cx="930" cy="314" rx="92" ry="47" fill="#aeb2c8" stroke="#08080c" stroke-width="2.2"/><ellipse cx="930" cy="305" rx="90" ry="46" fill="#9a9fb9" stroke="#08080c" stroke-width="3.4"/><ellipse cx="933" cy="303" rx="44" ry="22" fill="url(#ghole2)" stroke="#08080c" stroke-width="2.8"/><path d="M889 303 A44 22 0 0 1 977 303 A44 17 0 0 0 889 303Z" fill="#7b82a3" opacity=".55"/><path d="M655 320 L845 300 L860 400 L780 420Z" fill="#858ba8" stroke="#08080c" stroke-width="2.4"/><path d="M680.0 418.0 A70 33 0 0 0 820.0 418.0 L831.7 328.0 A70 33 0 0 0 691.7 328.0Z" fill="url(#gblack)" stroke="#0a0a0a" stroke-width="3" stroke-linejoin="round"/><ellipse cx="761.7" cy="328.0" rx="70" ry="33" fill="#3a3a3a" stroke="#0a0a0a" stroke-width="3"/><ellipse cx="763" cy="327" rx="37" ry="18" fill="#1e1e1e" stroke="#606060" stroke-width="2.4"/><path d="M715 462 L895 430 Q962 470 965 565 Q965 660 930 705 L760 740Z" fill="url(#gtube)" stroke="#08080c" stroke-width="3"/><path d="M662 700 Q650 790 690 870 Q720 900 760 880 Q795 860 805 735Z" fill="#9a9fb9" stroke="#08080c" stroke-width="3"/><path d="M770 745 L795 740 L775 870 L752 880Z" fill="#8288a7" stroke="#08080c" stroke-width="2"/><ellipse cx="716" cy="800" rx="33" ry="62" fill="url(#gbore)" stroke="#08080c" stroke-width="2.4" transform="rotate(-8 716 800)"/><ellipse cx="722" cy="806" rx="20" ry="46" fill="#3a3a3a" stroke="#08080c" stroke-width="2" transform="rotate(-8 722 806)"/><ellipse cx="714" cy="600" rx="72" ry="142" fill="#9a9fb9" stroke="#08080c" stroke-width="3.4" transform="rotate(-6 714 600)"/><ellipse cx="718" cy="602" rx="58" ry="122" fill="url(#gbore)" stroke="#08080c" stroke-width="2.4" transform="rotate(-6 718 602)"/><path d="M1178.0 905.0 A72 33 0 0 0 1322.0 905.0 L1383.6 431.0 A72 33 0 0 0 1239.6 431.0Z" fill="url(#gblack)" stroke="#0a0a0a" stroke-width="3.2" stroke-linejoin="round"/><ellipse cx="1311.6" cy="431.0" rx="72" ry="33" fill="#262626" stroke="#0a0a0a" stroke-width="3.2"/><path d="M1257.0 428.0 A60 27 0 0 0 1377.0 428.0 L1379.6 408.0 A60 27 0 0 0 1259.6 408.0Z" fill="url(#gblack)" stroke="#0a0a0a" stroke-width="2.5" stroke-linejoin="round"/><ellipse cx="1319.6" cy="408.0" rx="60" ry="27" fill="#2a2a2a" stroke="#0a0a0a" stroke-width="2.5"/><path d="M1272 402 Q1266 324 1326 322 Q1386 324 1380 402 A54 23 0 0 1 1272 402Z" fill="url(#gball)" stroke="#0a0a0a" stroke-width="3"/></g>
<g transform="translate(890.0,457.1) scale(0.27778)"><path d="M597.6 903.6 A72 33 0 0 0 741.6 903.6 L788.9 540.0 A72 33 0 0 0 644.9 540.0Z" fill="url(#gblack)" stroke="#0a0a0a" stroke-width="3.2" stroke-linejoin="round"/><path d="M949.8 845.0 A110 50 0 0 0 1169.8 845.0 L1223.8 430.0 A110 50 0 0 0 1003.8 430.0Z" fill="url(#gblack)" stroke="#0a0a0a" stroke-width="3.2" stroke-linejoin="round"/><path d="M979.7 615.0 A110 50 0 0 0 1199.7 615.0" fill="none" stroke="#050505" stroke-width="4.2"/><path d="M981.7 621.0 A110 50 0 0 0 1197.7 621.0" fill="none" stroke="#5a5a5a" stroke-width="1.9" opacity=".7"/><path d="M32.4 910.8 A72 34 0 0 0 176.4 910.8 L223.3 550.0 A72 34 0 0 0 79.3 550.0Z" fill="url(#gblack)" stroke="#0a0a0a" stroke-width="3.2" stroke-linejoin="round"/><path d="M181.6 972.0 A110 50 0 0 0 401.6 972.0 L457.1 545.0 A110 50 0 0 0 237.1 545.0Z" fill="url(#gblack)" stroke="#0a0a0a" stroke-width="3.2" stroke-linejoin="round"/><path d="M212.0 738.0 A110 50 0 0 0 432.0 738.0" fill="none" stroke="#050505" stroke-width="4.2"/><path d="M214.0 744.0 A110 50 0 0 0 430.0 744.0" fill="none" stroke="#5a5a5a" stroke-width="1.9" opacity=".7"/><path d="M97.0 690.0 A46 20 0 0 0 189.0 690.0 L205.9 560.0 A46 20 0 0 0 113.9 560.0Z" fill="url(#gpin)" stroke="#08080c" stroke-width="2.6" stroke-linejoin="round"/><path d="M612 80 L792 52 Q850 60 858 150 Q860 215 838 250 L690 290 L600 305Z" fill="url(#gtube)" stroke="#08080c" stroke-width="3"/><ellipse cx="607" cy="193" rx="66" ry="114" fill="#9a9fb9" stroke="#08080c" stroke-width="3.4" transform="rotate(-7 607 193)"/><ellipse cx="611" cy="195" rx="53" ry="98" fill="url(#gbore)" stroke="#08080c" stroke-width="2.4" transform="rotate(-7 611 195)"/><path d="M660 120 L820 92" stroke="#08080c" stroke-width="2" fill="none"/><path d="M665 275 L850 238 L905 262 L700 305Z" fill="#9a9fb9" stroke="#08080c" stroke-width="3.4" stroke-linejoin="round"/><path d="M672 262 L845 228 L850 240 L678 277Z" fill="#aeb2c8" stroke="#08080c" stroke-width="2" stroke-linejoin="round"/><path d="M240 402 L500 358 L560 322 L700 298 L870 262 L1010 288 L1255 236 L1300 342 L905 437 L650 487 L598 482 L537 472 L262 512Z" fill="#9a9fb9" stroke="#08080c" stroke-width="3.4" stroke-linejoin="round"/><path d="M215 528 L537 474 L537 513 L211 576Z" fill="#9096b1" stroke="#08080c" stroke-width="3.4" stroke-linejoin="round"/><path d="M222 524 L537 470 L537 478 L222 534Z" fill="#aeb2c8" stroke="#08080c" stroke-width="1.6" stroke-linejoin="round"/><path d="M905 437 L1280 340 L1255 404 L942 481Z" fill="#9096b1" stroke="#08080c" stroke-width="3.4" stroke-linejoin="round"/><path d="M905 433 L1285 333 L1283 343 L908 444Z" fill="#aeb2c8" stroke="#08080c" stroke-width="1.6" stroke-linejoin="round"/><path d="M532.0 530.0 A33 10 0 0 0 598.0 530.0 L604.5 480.0 A33 10 0 0 0 538.5 480.0Z" fill="url(#gboss)" stroke="#08080c" stroke-width="2.4" stroke-linejoin="round"/><path d="M598 482 L660 500 L660 545 L598 532Z" fill="#9096b1" stroke="#08080c" stroke-width="2.4" stroke-linejoin="round"/><path d="M76.4 565.0 A88 43 0 0 0 252.4 565.0 L268.0 445.0 A88 43 0 0 0 92.0 445.0Z" fill="url(#gboss)" stroke="#08080c" stroke-width="3" stroke-linejoin="round"/><ellipse cx="180" cy="445" rx="88" ry="43" fill="#9a9fb9" stroke="#08080c" stroke-width="3.4"/><ellipse cx="182" cy="447" rx="74" ry="35" fill="none" stroke="#08080c" stroke-width="1.8"/><path d="M1229.4 363.0 A88 43 0 0 0 1405.4 363.0 L1421.0 243.0 A88 43 0 0 0 1245.0 243.0Z" fill="url(#gboss)" stroke="#08080c" stroke-width="3" stroke-linejoin="round"/><ellipse cx="1333" cy="243" rx="88" ry="43" fill="#9a9fb9" stroke="#08080c" stroke-width="3.4"/><ellipse cx="1335" cy="245" rx="74" ry="35" fill="none" stroke="#08080c" stroke-width="1.8"/><path d="M143.0 443.0 A42 20 0 0 0 227.0 443.0 L241.9 328.0 A42 20 0 0 0 157.9 328.0Z" fill="url(#gpin)" stroke="#08080c" stroke-width="2.8" stroke-linejoin="round"/><ellipse cx="199.9" cy="328.0" rx="42" ry="20" fill="#a3a8c0" stroke="#08080c" stroke-width="2.8"/><path d="M1299.0 238.0 A42 20 0 0 0 1383.0 238.0 L1398.2 121.0 A42 20 0 0 0 1314.2 121.0Z" fill="url(#gpin)" stroke="#08080c" stroke-width="2.8" stroke-linejoin="round"/><ellipse cx="1356.2" cy="121.0" rx="42" ry="20" fill="#a3a8c0" stroke="#08080c" stroke-width="2.8"/><ellipse cx="573" cy="415" rx="97" ry="50" fill="#9096b1" stroke="#08080c" stroke-width="3.4"/><ellipse cx="574" cy="404" rx="95" ry="49" fill="url(#gboss)" stroke="#08080c" stroke-width="2.2"/><ellipse cx="575" cy="394" rx="92" ry="47" fill="#aeb2c8" stroke="#08080c" stroke-width="2.2"/><ellipse cx="575" cy="385" rx="90" ry="46" fill="#9a9fb9" stroke="#08080c" stroke-width="3.4"/><ellipse cx="578" cy="383" rx="44" ry="22" fill="url(#ghole2)" stroke="#08080c" stroke-width="2.8"/><path d="M534 383 A44 22 0 0 1 622 383 A44 17 0 0 0 534 383Z" fill="#7b82a3" opacity=".55"/><ellipse cx="928" cy="335" rx="97" ry="50" fill="#9096b1" stroke="#08080c" stroke-width="3.4"/><ellipse cx="929" cy="324" rx="95" ry="49" fill="url(#gboss)" stroke="#08080c" stroke-width="2.2"/><ellipse cx="930" cy="314" rx="92" ry="47" fill="#aeb2c8" stroke="#08080c" stroke-width="2.2"/><ellipse cx="930" cy="305" rx="90" ry="46" fill="#9a9fb9" stroke="#08080c" stroke-width="3.4"/><ellipse cx="933" cy="303" rx="44" ry="22" fill="url(#ghole2)" stroke="#08080c" stroke-width="2.8"/><path d="M889 303 A44 22 0 0 1 977 303 A44 17 0 0 0 889 303Z" fill="#7b82a3" opacity=".55"/><path d="M655 320 L845 300 L860 400 L780 420Z" fill="#858ba8" stroke="#08080c" stroke-width="2.4"/><path d="M680.0 418.0 A70 33 0 0 0 820.0 418.0 L831.7 328.0 A70 33 0 0 0 691.7 328.0Z" fill="url(#gblack)" stroke="#0a0a0a" stroke-width="3" stroke-linejoin="round"/><ellipse cx="761.7" cy="328.0" rx="70" ry="33" fill="#3a3a3a" stroke="#0a0a0a" stroke-width="3"/><ellipse cx="763" cy="327" rx="37" ry="18" fill="#1e1e1e" stroke="#606060" stroke-width="2.4"/><path d="M715 462 L895 430 Q962 470 965 565 Q965 660 930 705 L760 740Z" fill="url(#gtube)" stroke="#08080c" stroke-width="3"/><path d="M662 700 Q650 790 690 870 Q720 900 760 880 Q795 860 805 735Z" fill="#9a9fb9" stroke="#08080c" stroke-width="3"/><path d="M770 745 L795 740 L775 870 L752 880Z" fill="#8288a7" stroke="#08080c" stroke-width="2"/><ellipse cx="716" cy="800" rx="33" ry="62" fill="url(#gbore)" stroke="#08080c" stroke-width="2.4" transform="rotate(-8 716 800)"/><ellipse cx="722" cy="806" rx="20" ry="46" fill="#3a3a3a" stroke="#08080c" stroke-width="2" transform="rotate(-8 722 806)"/><ellipse cx="714" cy="600" rx="72" ry="142" fill="#9a9fb9" stroke="#08080c" stroke-width="3.4" transform="rotate(-6 714 600)"/><ellipse cx="718" cy="602" rx="58" ry="122" fill="url(#gbore)" stroke="#08080c" stroke-width="2.4" transform="rotate(-6 718 602)"/><path d="M1178.0 905.0 A72 33 0 0 0 1322.0 905.0 L1383.6 431.0 A72 33 0 0 0 1239.6 431.0Z" fill="url(#gblack)" stroke="#0a0a0a" stroke-width="3.2" stroke-linejoin="round"/><ellipse cx="1311.6" cy="431.0" rx="72" ry="33" fill="#262626" stroke="#0a0a0a" stroke-width="3.2"/><path d="M1257.0 428.0 A60 27 0 0 0 1377.0 428.0 L1379.6 408.0 A60 27 0 0 0 1259.6 408.0Z" fill="url(#gblack)" stroke="#0a0a0a" stroke-width="2.5" stroke-linejoin="round"/><ellipse cx="1319.6" cy="408.0" rx="60" ry="27" fill="#2a2a2a" stroke="#0a0a0a" stroke-width="2.5"/><path d="M1272 402 Q1266 324 1326 322 Q1386 324 1380 402 A54 23 0 0 1 1272 402Z" fill="url(#gball)" stroke="#0a0a0a" stroke-width="3"/></g>
<g transform="translate(1030.0,580.0) scale(0.27778)"><path d="M597.6 903.6 A72 33 0 0 0 741.6 903.6 L788.9 540.0 A72 33 0 0 0 644.9 540.0Z" fill="url(#gblack)" stroke="#0a0a0a" stroke-width="3.2" stroke-linejoin="round"/><path d="M949.8 845.0 A110 50 0 0 0 1169.8 845.0 L1223.8 430.0 A110 50 0 0 0 1003.8 430.0Z" fill="url(#gblack)" stroke="#0a0a0a" stroke-width="3.2" stroke-linejoin="round"/><path d="M979.7 615.0 A110 50 0 0 0 1199.7 615.0" fill="none" stroke="#050505" stroke-width="4.2"/><path d="M981.7 621.0 A110 50 0 0 0 1197.7 621.0" fill="none" stroke="#5a5a5a" stroke-width="1.9" opacity=".7"/><path d="M32.4 910.8 A72 34 0 0 0 176.4 910.8 L223.3 550.0 A72 34 0 0 0 79.3 550.0Z" fill="url(#gblack)" stroke="#0a0a0a" stroke-width="3.2" stroke-linejoin="round"/><path d="M181.6 972.0 A110 50 0 0 0 401.6 972.0 L457.1 545.0 A110 50 0 0 0 237.1 545.0Z" fill="url(#gblack)" stroke="#0a0a0a" stroke-width="3.2" stroke-linejoin="round"/><path d="M212.0 738.0 A110 50 0 0 0 432.0 738.0" fill="none" stroke="#050505" stroke-width="4.2"/><path d="M214.0 744.0 A110 50 0 0 0 430.0 744.0" fill="none" stroke="#5a5a5a" stroke-width="1.9" opacity=".7"/><path d="M97.0 690.0 A46 20 0 0 0 189.0 690.0 L205.9 560.0 A46 20 0 0 0 113.9 560.0Z" fill="url(#gpin)" stroke="#08080c" stroke-width="2.6" stroke-linejoin="round"/><path d="M612 80 L792 52 Q850 60 858 150 Q860 215 838 250 L690 290 L600 305Z" fill="url(#gtube)" stroke="#08080c" stroke-width="3"/><ellipse cx="607" cy="193" rx="66" ry="114" fill="#9a9fb9" stroke="#08080c" stroke-width="3.4" transform="rotate(-7 607 193)"/><ellipse cx="611" cy="195" rx="53" ry="98" fill="url(#gbore)" stroke="#08080c" stroke-width="2.4" transform="rotate(-7 611 195)"/><path d="M660 120 L820 92" stroke="#08080c" stroke-width="2" fill="none"/><path d="M665 275 L850 238 L905 262 L700 305Z" fill="#9a9fb9" stroke="#08080c" stroke-width="3.4" stroke-linejoin="round"/><path d="M672 262 L845 228 L850 240 L678 277Z" fill="#aeb2c8" stroke="#08080c" stroke-width="2" stroke-linejoin="round"/><path d="M240 402 L500 358 L560 322 L700 298 L870 262 L1010 288 L1255 236 L1300 342 L905 437 L650 487 L598 482 L537 472 L262 512Z" fill="#9a9fb9" stroke="#08080c" stroke-width="3.4" stroke-linejoin="round"/><path d="M215 528 L537 474 L537 513 L211 576Z" fill="#9096b1" stroke="#08080c" stroke-width="3.4" stroke-linejoin="round"/><path d="M222 524 L537 470 L537 478 L222 534Z" fill="#aeb2c8" stroke="#08080c" stroke-width="1.6" stroke-linejoin="round"/><path d="M905 437 L1280 340 L1255 404 L942 481Z" fill="#9096b1" stroke="#08080c" stroke-width="3.4" stroke-linejoin="round"/><path d="M905 433 L1285 333 L1283 343 L908 444Z" fill="#aeb2c8" stroke="#08080c" stroke-width="1.6" stroke-linejoin="round"/><path d="M532.0 530.0 A33 10 0 0 0 598.0 530.0 L604.5 480.0 A33 10 0 0 0 538.5 480.0Z" fill="url(#gboss)" stroke="#08080c" stroke-width="2.4" stroke-linejoin="round"/><path d="M598 482 L660 500 L660 545 L598 532Z" fill="#9096b1" stroke="#08080c" stroke-width="2.4" stroke-linejoin="round"/><path d="M76.4 565.0 A88 43 0 0 0 252.4 565.0 L268.0 445.0 A88 43 0 0 0 92.0 445.0Z" fill="url(#gboss)" stroke="#08080c" stroke-width="3" stroke-linejoin="round"/><ellipse cx="180" cy="445" rx="88" ry="43" fill="#9a9fb9" stroke="#08080c" stroke-width="3.4"/><ellipse cx="182" cy="447" rx="74" ry="35" fill="none" stroke="#08080c" stroke-width="1.8"/><path d="M1229.4 363.0 A88 43 0 0 0 1405.4 363.0 L1421.0 243.0 A88 43 0 0 0 1245.0 243.0Z" fill="url(#gboss)" stroke="#08080c" stroke-width="3" stroke-linejoin="round"/><ellipse cx="1333" cy="243" rx="88" ry="43" fill="#9a9fb9" stroke="#08080c" stroke-width="3.4"/><ellipse cx="1335" cy="245" rx="74" ry="35" fill="none" stroke="#08080c" stroke-width="1.8"/><path d="M143.0 443.0 A42 20 0 0 0 227.0 443.0 L241.9 328.0 A42 20 0 0 0 157.9 328.0Z" fill="url(#gpin)" stroke="#08080c" stroke-width="2.8" stroke-linejoin="round"/><ellipse cx="199.9" cy="328.0" rx="42" ry="20" fill="#a3a8c0" stroke="#08080c" stroke-width="2.8"/><path d="M1299.0 238.0 A42 20 0 0 0 1383.0 238.0 L1398.2 121.0 A42 20 0 0 0 1314.2 121.0Z" fill="url(#gpin)" stroke="#08080c" stroke-width="2.8" stroke-linejoin="round"/><ellipse cx="1356.2" cy="121.0" rx="42" ry="20" fill="#a3a8c0" stroke="#08080c" stroke-width="2.8"/><ellipse cx="573" cy="415" rx="97" ry="50" fill="#9096b1" stroke="#08080c" stroke-width="3.4"/><ellipse cx="574" cy="404" rx="95" ry="49" fill="url(#gboss)" stroke="#08080c" stroke-width="2.2"/><ellipse cx="575" cy="394" rx="92" ry="47" fill="#aeb2c8" stroke="#08080c" stroke-width="2.2"/><ellipse cx="575" cy="385" rx="90" ry="46" fill="#9a9fb9" stroke="#08080c" stroke-width="3.4"/><ellipse cx="578" cy="383" rx="44" ry="22" fill="url(#ghole2)" stroke="#08080c" stroke-width="2.8"/><path d="M534 383 A44 22 0 0 1 622 383 A44 17 0 0 0 534 383Z" fill="#7b82a3" opacity=".55"/><ellipse cx="928" cy="335" rx="97" ry="50" fill="#9096b1" stroke="#08080c" stroke-width="3.4"/><ellipse cx="929" cy="324" rx="95" ry="49" fill="url(#gboss)" stroke="#08080c" stroke-width="2.2"/><ellipse cx="930" cy="314" rx="92" ry="47" fill="#aeb2c8" stroke="#08080c" stroke-width="2.2"/><ellipse cx="930" cy="305" rx="90" ry="46" fill="#9a9fb9" stroke="#08080c" stroke-width="3.4"/><ellipse cx="933" cy="303" rx="44" ry="22" fill="url(#ghole2)" stroke="#08080c" stroke-width="2.8"/><path d="M889 303 A44 22 0 0 1 977 303 A44 17 0 0 0 889 303Z" fill="#7b82a3" opacity=".55"/><path d="M655 320 L845 300 L860 400 L780 420Z" fill="#858ba8" stroke="#08080c" stroke-width="2.4"/><path d="M680.0 418.0 A70 33 0 0 0 820.0 418.0 L831.7 328.0 A70 33 0 0 0 691.7 328.0Z" fill="url(#gblack)" stroke="#0a0a0a" stroke-width="3" stroke-linejoin="round"/><ellipse cx="761.7" cy="328.0" rx="70" ry="33" fill="#3a3a3a" stroke="#0a0a0a" stroke-width="3"/><ellipse cx="763" cy="327" rx="37" ry="18" fill="#1e1e1e" stroke="#606060" stroke-width="2.4"/><path d="M715 462 L895 430 Q962 470 965 565 Q965 660 930 705 L760 740Z" fill="url(#gtube)" stroke="#08080c" stroke-width="3"/><path d="M662 700 Q650 790 690 870 Q720 900 760 880 Q795 860 805 735Z" fill="#9a9fb9" stroke="#08080c" stroke-width="3"/><path d="M770 745 L795 740 L775 870 L752 880Z" fill="#8288a7" stroke="#08080c" stroke-width="2"/><ellipse cx="716" cy="800" rx="33" ry="62" fill="url(#gbore)" stroke="#08080c" stroke-width="2.4" transform="rotate(-8 716 800)"/><ellipse cx="722" cy="806" rx="20" ry="46" fill="#3a3a3a" stroke="#08080c" stroke-width="2" transform="rotate(-8 722 806)"/><ellipse cx="714" cy="600" rx="72" ry="142" fill="#9a9fb9" stroke="#08080c" stroke-width="3.4" transform="rotate(-6 714 600)"/><ellipse cx="718" cy="602" rx="58" ry="122" fill="url(#gbore)" stroke="#08080c" stroke-width="2.4" transform="rotate(-6 718 602)"/><path d="M1178.0 905.0 A72 33 0 0 0 1322.0 905.0 L1383.6 431.0 A72 33 0 0 0 1239.6 431.0Z" fill="url(#gblack)" stroke="#0a0a0a" stroke-width="3.2" stroke-linejoin="round"/><ellipse cx="1311.6" cy="431.0" rx="72" ry="33" fill="#262626" stroke="#0a0a0a" stroke-width="3.2"/><path d="M1257.0 428.0 A60 27 0 0 0 1377.0 428.0 L1379.6 408.0 A60 27 0 0 0 1259.6 408.0Z" fill="url(#gblack)" stroke="#0a0a0a" stroke-width="2.5" stroke-linejoin="round"/><ellipse cx="1319.6" cy="408.0" rx="60" ry="27" fill="#2a2a2a" stroke="#0a0a0a" stroke-width="2.5"/><path d="M1272 402 Q1266 324 1326 322 Q1386 324 1380 402 A54 23 0 0 1 1272 402Z" fill="url(#gball)" stroke="#0a0a0a" stroke-width="3"/></g>
</g><rect x="0" y="1052" width="1681" height="2" fill="#fff"/><rect x="1679" y="200" width="2" height="854" fill="#fff"/><rect x="0" y="198.300" width="1681" height="1.200" fill="#8e8e8e"/></svg>
<div id="title" class="abs"></div><div id="titleglow" class="abs"></div>
<div id="qat" class="abs"></div>
<div id="orb" class="abs"></div>
<svg id="orbico" style="left:7px;top:7px;z-index:6" width="35" height="35" viewBox="0 0 40 40">
 <path d="M9 13 L22 9 L33 12 L33 17 L28 19 Q25 22 28 25 L31 27 L31 30 L20 34 L9 30 L9 27 L15 25 Q17 21 14 18 L9 16 Z" fill="#2c4660" stroke="#1d3045" stroke-width=".6"/>
 <path d="M9 13 L22 9 L33 12 L20 16 Z" fill="#4d6a88"/>
 <path d="M9 27 L20 31 L31 27 L31 30 L20 34 L9 30Z" fill="#1f344a"/>
 <circle cx="14" cy="13" r="1" fill="#dfe6ee"/><circle cx="27" cy="12" r="1" fill="#dfe6ee"/><circle cx="20" cy="10.5" r=".9" fill="#dfe6ee"/><circle cx="13" cy="28.5" r="1" fill="#dfe6ee"/><circle cx="22" cy="31.5" r="1" fill="#dfe6ee"/>
</svg>
<!-- quick access icons -->
<svg id="qaticons" style="left:50px;top:8px" width="250" height="22" viewBox="0 0 250 22">
 <g><rect x="5.500" y="3.500" width="13" height="13" fill="#fff" stroke="#555" stroke-width="1"/><path d="M14 3.500 L18.500 8 L14 8Z" fill="#ddd" stroke="#555" stroke-width=".8"/><path d="M7 6 L12 11 M12 11 L8 11 M12 11 L12 7 M8 13 L15 13" stroke="#d01818" stroke-width="1.800" fill="none"/></g>
 <g transform="translate(22,0)"><path d="M5 16 L5 5 L10 5 L11.500 7 L18 7 L18 9 L9 9 Z" fill="#e9c64a" stroke="#8a6d14" stroke-width="1"/><path d="M5 16 L9 9 L21 9 L17 16Z" fill="#f6df7c" stroke="#8a6d14" stroke-width="1"/></g>
 <g transform="translate(44,0)"><rect x="6.500" y="2.500" width="13" height="14" rx="1" fill="#6d7785" stroke="#39414d"/><rect x="9" y="3" width="8" height="5" fill="#dfe3e8"/><rect x="9.500" y="11" width="7" height="5" fill="#2f3640"/><rect x="11" y="12" width="2" height="3" fill="#dfe3e8"/></g>
 <g transform="translate(66,0)" fill="none" stroke="#7b8696" stroke-width="2.200"><path d="M6 9 L11 4 L11 7 Q18 7 18 14 Q16 10.500 11 11 L11 14 Z" fill="#8d98a8" stroke-width="1"/></g>
 <g transform="translate(88,0)"><path d="M20 9 L15 4 L15 7 Q8 7 8 14 Q10 10.500 15 11 L15 14 Z" fill="#8d98a8" stroke="#7b8696" stroke-width="1"/></g>
 <g transform="translate(110,0)"><path d="M5 6 L8 3 L15 3 L15 10 L12 13 L5 13Z" fill="#d9e6f7" stroke="#2a55a8" stroke-width="1.200"/><path d="M5 6 L12 6 L12 13 M12 6 L15 3" fill="none" stroke="#2a55a8" stroke-width="1.200"/><path d="M13 14.500 L21 14.500 M17 10.500 L17 18.500" stroke="#d42a2a" stroke-width="2.400"/></g>
 <g transform="translate(132,0)"><path d="M5 3 L17 3 L20 6 L20 10 L5 10Z" fill="#f5dc55" stroke="#9a7d10" stroke-width=".8"/><path d="M6 10 L9 8 L14 8 L14 14 L11 16 L6 16Z" fill="#bcd3f2" stroke="#2a55a8" stroke-width="1"/><path d="M15 12 L19 12 L19 10 L22.500 13.200 L19 16.500 L19 14.500 L15 14.500Z" fill="#3b79d6" stroke="#1c4a9a" stroke-width=".6"/></g>
 <g transform="translate(154,0)"><circle cx="16" cy="7" r="4.200" fill="#f3d42c" stroke="#111" stroke-width="1.200"/><circle cx="16" cy="7" r="1.600" fill="#fff6b0" stroke="#111" stroke-width=".6"/><circle cx="9" cy="13.500" r="3.300" fill="#e8e8e8" stroke="#111" stroke-width="1.200"/><circle cx="9" cy="13.500" r="1.200" fill="#fff" stroke="#111" stroke-width=".6"/><path d="M7 2 L7 8 M4 5 L10 5 M5 3 L9 7 M9 3 L5 7" stroke="#f0a010" stroke-width="1"/></g>
 <g transform="translate(176,0)"><circle cx="13" cy="11" r="6.500" fill="#b8b56a" stroke="#8e8a42" stroke-width="1"/><circle cx="13" cy="3.500" r="1.600" fill="#a9a55a"/><circle cx="6" cy="14" r="1.600" fill="#a9a55a"/><circle cx="20" cy="14" r="1.600" fill="#a9a55a"/><circle cx="13" cy="10" r="1" fill="#c44"/></g>
 <g transform="translate(198,0)"><rect x="2" y="0" width="21" height="21" rx="2" fill="#f7c569" stroke="#e2a23a" stroke-width="1"/><rect x="3" y="1" width="19" height="9" rx="1.500" fill="#fbdc9b" opacity=".8"/><path d="M7.500 2 L7.500 8 M4.500 5 L10.500 5 M5.500 3 L9.500 7 M9.500 3 L5.500 7" stroke="#fff3c0" stroke-width="1.200"/><g fill="none" stroke="#3f7fc4" stroke-width="1"><rect x="13.500" y="2.500" width="3" height="3"/><rect x="11" y="8.500" width="3" height="3"/><rect x="16" y="8.500" width="3" height="3"/><rect x="8.500" y="14.500" width="3" height="3"/><rect x="13.500" y="14.500" width="3" height="3"/><rect x="18.500" y="14.500" width="3" height="3"/><path d="M15 5.500 L12.500 8.500 M15 5.500 L17.500 8.500 M12.500 11.500 L10 14.500 M12.500 11.500 L15 14.500 M17.500 11.500 L20 14.500"/></g></g>
 <path d="M238 7 L244 7 M238.500 10 L241 13 L243.500 10" stroke="#c9d0da" stroke-width="1.200" fill="none"/>
</svg>
<div id="ttext" class="abs"><span style="letter-spacing:-0.60px;">IronCAD for Renishaw FixtureBuilder 2016 (NFR) - [2C87140 FIXT...CAST*:1]</span></div>
<!-- blurred user text -->
<div class="abs" style="left:1600px;top:11px;width:110px;height:14px;background:radial-gradient(ellipse at 50% 50%,rgba(120,135,155,.35),rgba(120,135,155,0) 70%)"></div>
<!-- window controls -->
<div class="abs" style="left:1788px;top:-4px;width:128px;height:26px;border-radius:0 0 6px 6px;border:1px solid #1d232c;box-shadow:0 0 0 1px rgba(255,255,255,.45);background:linear-gradient(180deg,#9aa4b2 0,#7b8797 45%,#4e5a6b 50%,#66748a 100%)"></div>
<div class="abs" style="left:1858px;top:-4px;width:58px;height:25px;border-radius:0 0 5px 0;border-left:1px solid #3a2a2a;background:linear-gradient(180deg,#e8a896 0,#d9725c 45%,#c63a22 50%,#d8563a 100%)"></div>
<div class="abs" style="left:1824px;top:0;width:1px;height:21px;background:#2a313b;box-shadow:1px 0 0 rgba(255,255,255,.35)"></div>
<svg style="left:1788px;top:0" width="128" height="22" viewBox="0 0 128 22">
 <rect x="12" y="12.500" width="15" height="4" fill="#fff" stroke="#3a4350" stroke-width=".8"/>
 <g fill="none" stroke="#fff" stroke-width="2"><rect x="50" y="3.500" width="10" height="9"/><rect x="45.500" y="7.500" width="10.500" height="9.500" fill="#6c798c"/></g>
 <path transform="translate(-3,0)" d="M92 4 L97 4 L101.500 9 L106 4 L111 4 L104 11 L111 18 L106 18 L101.500 13 L97 18 L92 18 L99 11Z" fill="#fff" stroke="#5a2a22" stroke-width=".8"/>
</svg>
<!-- ribbon tab row -->
<div id="tabrow" class="abs"></div>
<div id="rtab" class="abs"><span style="letter-spacing:-0.75px;">FixtureBuilder</span></div>
<div class="abs" style="letter-spacing:-1.01px;left:1762px;top:42px;color:#fff;font-size:15px;line-height:18px">Styles</div>
<svg style="left:1800px;top:38px" width="120" height="22" viewBox="0 0 120 22" fill="none">
 <path d="M5.500 8.500 L8 11 L10.500 8.500" stroke="#e8e8e8" stroke-width="1.200"/>
 <circle cx="24" cy="9.500" r="7" fill="#fdfdfd" stroke="#2d3f86" stroke-width="1.200"/><circle cx="24" cy="9.500" r="6" fill="none" stroke="#e7ebf7" stroke-width="1"/>
 <path d="M39.500 8.500 L42 11 L44.500 8.500" stroke="#e8e8e8" stroke-width="1.200"/>
 <path d="M56 14 L63 14" stroke="#7b7b7b" stroke-width="2"/>
 <rect x="81.500" y="7.500" width="7" height="5" stroke="#8a8a8a" stroke-width="1.300"/><path d="M83.500 7 L83.500 5.500 L90.500 5.500 L90.500 10.500 L89 10.500" stroke="#8a8a8a" stroke-width="1.300"/>
 <path d="M103.500 6.500 L110.500 13.500 M110.500 6.500 L103.500 13.500" stroke="#8a8a8a" stroke-width="2.200"/>
</svg>
<div class="abs" style="left:1819px;top:39px;width:10px;font-size:14px;font-weight:bold;color:#e02020;line-height:16px;text-align:center;letter-spacing:0">?</div>

<div id="ribbon" class="abs"></div>
<div class="grp abs" style="left:4px;width:506px"><div class="lbl"><span style="letter-spacing:-0.67px;">FixtureBuilder Tools</span></div></div>
<div class="grp abs" style="left:513px;width:385px"><div class="lbl"><span style="letter-spacing:-0.97px;">Assembly</span></div></div>
<div class="grp abs" style="left:900px;width:424px"><div class="lbl"><span style="letter-spacing:-0.81px;">Tools</span></div></div>
<div class="grp abs" style="left:1328px;width:194px"><div class="lbl"><span style="letter-spacing:-0.86px;">Catalogs</span></div></div>
<!-- group 1 -->
<svg style="left:12px;top:72px" width="80" height="32" viewBox="0 0 80 32">
 <g transform="translate(1,0)"><rect x="1" y="1" width="30" height="28" fill="#fff23a" stroke="#000" stroke-width="2"/>
 <g fill="#0a0a7a"><rect x="5" y="5" width="3" height="3"/><rect x="5" y="11" width="3" height="3"/><rect x="5" y="17" width="3" height="3"/><rect x="5" y="23" width="3" height="2"/></g>
 <g stroke="#000" stroke-width="1.600"><path d="M10 6.500 L17 6.500 M10 12.500 L17 12.500 M10 18.500 L26 18.500 M10 24 L26 24"/></g>
 <path d="M18 8 L22 4.500 L28 4.500 L28 10 L24 13.500 L18 13.500Z" fill="#c01818" stroke="#000" stroke-width="1"/><path d="M18 8 L24 8 L24 13.500 M24 8 L28 4.500" fill="none" stroke="#000" stroke-width=".8"/></g>
 <rect x="44" y="1" width="30" height="28" fill="#fff" stroke="#000" stroke-width="2"/>
 <path d="M49 15 L56 9 L69 9 L69 15 L62 21 L49 21Z" fill="#35d3d8" stroke="#000" stroke-width="1.400"/><path d="M49 15 L62 15 L62 21 M62 15 L69 9" fill="none" stroke="#000" stroke-width="1.400"/><path d="M49 15 L56 9 L69 9 L62 15Z" fill="#7fe9ec" stroke="#000" stroke-width="1.400"/>
</svg>
<div class="rt c" style="letter-spacing:-0.87px;left:29px;top:108px">Build</div><div class="rt c" style="letter-spacing:0.06px;left:28px;top:127px">It!</div>
<div class="rt c" style="letter-spacing:-0.94px;left:71px;top:108px">Export</div><div class="rt c" style="letter-spacing:-0.88px;left:70px;top:127px">Image</div>
<svg style="left:96px;top:73px" width="190" height="68" viewBox="0 0 190 68">
 <g><rect x=".5" y=".5" width="15" height="15" fill="#a4a4a4" stroke="#555" /><path d="M3 6 L6 3 L12 3 L12 9 L9 12 L3 12Z" fill="#7b7b7b" stroke="#444" stroke-width=".8"/><path d="M5 8 L8 5 L14 5 L14 11 L11 14 L5 14Z" fill="#8d8d8d" stroke="#444" stroke-width=".8" opacity=".9"/></g>
 <g transform="translate(0,25)"><rect x=".5" y=".5" width="15" height="15" fill="#fff" stroke="#000"/><circle cx="8" cy="8" r="5.500" fill="#1212d8"/><rect x="7" y="7" width="2" height="5" fill="#fff"/><rect x="7" y="4" width="2" height="2" fill="#fff"/></g>
 <g transform="translate(0,50)"><rect x=".5" y=".5" width="15" height="15" fill="#a4a4a4" stroke="#555"/><circle cx="8" cy="8" r="5" fill="#7f7f7f" stroke="#444" stroke-width="1.200"/><path d="M4.500 11.500 L11.500 4.500" stroke="#444" stroke-width="1.200"/></g>
 <g transform="translate(169,0)"><rect x=".5" y="2.500" width="15" height="13" fill="#d9d9d9" stroke="#444"/><path d="M.5 2.500 L4 .5 L8 2.500 L12 .5 L15.500 2.500" fill="none" stroke="#444"/><path d="M3 6 L6 6 M3 9 L6 9 M3 12 L6 12 M8 6 L13 6 M8 9 L13 9 M8 12 L13 12" stroke="#555" stroke-width="1.200"/></g>
</svg>
<div class="rt dis" style="letter-spacing:-0.59px;left:115px;top:73px">Intersection Analysis</div>
<div class="rt" style="letter-spacing:-0.37px;left:115px;top:98px">Information</div>
<div class="rt dis" style="letter-spacing:-0.51px;left:115px;top:123px">Ignore Part in Build List</div>
<div class="rt dis" style="letter-spacing:-0.47px;left:284px;top:73px">Configuration For Build Instructions</div>
<!-- group 2 -->
<svg style="left:524px;top:70px" width="370" height="50" viewBox="0 0 370 50">
 <g><path d="M5 10 L10 4 L25 4 L25 19 L20 25 L5 25Z" fill="#e8eff9" stroke="#2a4fa8" stroke-width="1.800"/><path d="M5 10 L20 10 L20 25 M20 10 L25 4" fill="none" stroke="#2a4fa8" stroke-width="1.800"/><path d="M20 10 L25 4 L25 19 L20 25Z" fill="#f3e27a"/><path d="M20 10 L25 4 L25 19 L20 25Z" fill="none" stroke="#2a4fa8" stroke-width="1.800"/><path d="M17 25.500 L35 25.500 M26 16.500 L26 34.500" stroke="#d22b2b" stroke-width="3.400"/></g>
 <g transform="translate(53,4)"><path d="M1 1 L11 1 L14 4 L14 8 L1 8Z" fill="#f5dc55" stroke="#9a7d10" stroke-width=".8"/><path d="M1 9 L4 6.500 L9 6.500 L9 12 L6 14.500 L1 14.500Z" fill="#bcd3f2" stroke="#2a55a8" stroke-width="1"/><path d="M9.500 10 L13 10 L13 8 L16.500 11.200 L13 14.500 L13 12.500 L9.500 12.500Z" fill="#3b79d6" stroke="#1c4a9a" stroke-width=".6"/></g>
 <g transform="translate(53,29)" stroke="#666" stroke-width=".9"><path d="M1 10 L4 7 L15 7 L12 10Z M1 10 L12 10 L12 14 L1 14Z M12 10 L15 7 L15 11 L12 14Z" fill="#8e8e8e"/><path d="M1 6 L4 3 L15 3 L12 6Z M1 6 L12 6 L12 9 L1 9Z M12 6 L15 3 L15 6 L12 9Z" fill="#a3a3a3"/><path d="M2 3 L5 .5 L15 .5 L12 3Z" fill="#bdbdbd"/></g>
 <g transform="translate(186,3)"><path d="M1 5 L10 1 L24 14 L15 18Z" fill="#f7e36b" stroke="#2a4fa8" stroke-width="1.500"/><path d="M1 5 L15 18 L15 28 L1 15Z" fill="#f1d24a" stroke="#2a4fa8" stroke-width="1.500"/><path d="M15 18 L24 14 L32 18 L32 28 L15 28Z" fill="#eecb42" stroke="#2a4fa8" stroke-width="1.500"/><path d="M10 8 L17 5 L27 12 L20 16Z" fill="#8fc0f0" stroke="#2a4fa8" stroke-width="1.300"/><path d="M10 8 L20 16 L20 21 L10 13Z" fill="#5f9be0" stroke="#2a4fa8" stroke-width="1.300"/><path d="M20 16 L27 12 L27 17 L20 21Z" fill="#74abe8" stroke="#2a4fa8" stroke-width="1.300"/></g>
 <g transform="translate(262,2)" stroke="#6d6d6d" stroke-width="1"><path d="M1 5 L5 1 L16 1 L16 12 L12 16 L1 16Z" fill="#8b8b8b"/><path d="M1 5 L12 5 L12 16 M12 5 L16 1" fill="none"/><path d="M1 20 L5 16 L16 16 L16 27 L12 31 L1 31Z" fill="#8b8b8b"/><path d="M1 20 L12 20 L12 31 M12 20 L16 16" fill="none"/><path d="M17 20 L21 16 L32 16 L32 27 L28 31 L17 31Z" fill="#8b8b8b"/><path d="M17 20 L28 20 L28 31 M28 20 L32 16" fill="none"/></g>
 <g transform="translate(328,2)"><circle cx="14.500" cy="17.500" r="13" fill="#8a8a8a" stroke="#6e6e6e"/><path d="M14.500 4.500 L14.500 0" stroke="#6e6e6e" stroke-width="1.500"/><circle cx="14.500" cy="3" r="1.500" fill="#7b7b7b"/><circle cx="3" cy="20" r="2" fill="#777"/><circle cx="26" cy="20" r="2" fill="#777"/><circle cx="14.500" cy="27" r="2" fill="#777"/><ellipse cx="14.500" cy="12" rx="9" ry="6" fill="#9a9a9a"/></g>
</svg>
<div class="rt c" style="letter-spacing:-0.20px;left:545px;top:108px"><u>I</u>mport</div>
<div class="rt" style="letter-spacing:-0.73px;left:596px;top:73px">Export <u>P</u>art</div>
<div class="rt dis" style="letter-spacing:-0.79px;left:596px;top:98px"><u>F</u>ixed in Parent</div>
<div class="rt c" style="letter-spacing:-1.02px;left:726px;top:108px"><u>A</u>ssemble</div>
<div class="rt c dis" style="letter-spacing:-1.11px;left:802px;top:108px">Disassemble</div>
<div class="rt c dis" style="letter-spacing:-0.95px;left:866px;top:108px"><u>T</u>riBall</div>
<!-- group 3 -->
<svg style="left:920px;top:70px" width="400" height="72" viewBox="0 0 400 72">
 <g><circle cx="26" cy="13" r="7" fill="#f7d928" stroke="#111" stroke-width="1.600"/><circle cx="26" cy="13" r="2.600" fill="#fffbd0" stroke="#111" stroke-width="1"/><g stroke="#111" stroke-width="2"><path d="M26 3.500 L26 5.500 M26 20.500 L26 22.500 M16.500 13 L18.500 13 M33.500 13 L35.500 13 M19.500 6.500 L21 8 M31 18 L32.500 19.500 M32.500 6.500 L31 8 M21 18 L19.500 19.500"/></g><circle cx="14" cy="24" r="5" fill="#dcdcdc" stroke="#111" stroke-width="1.400"/><circle cx="14" cy="24" r="1.800" fill="#fff" stroke="#111" stroke-width=".8"/><g stroke="#111" stroke-width="1.500"><path d="M14 17 L14 18.500 M14 29.500 L14 31 M7 24 L8.500 24 M19.500 24 L21 24 M9 19 L10 20 M18 28 L19 29 M19 19 L18 20 M10 28 L9 29"/></g><path d="M11 5 L11 14 M6.500 9.500 L15.500 9.500 M8 6.500 L14 12.500 M14 6.500 L8 12.500" stroke="#f0a010" stroke-width="1.200"/></g>
 <g transform="translate(76,0)" stroke="#111" fill="none"><path d="M6 8 L26 28" stroke-width="1.600"/><path d="M2 10 L11 2 M21 33 L31 25" stroke-width="1.600"/><path d="M6 8 L12.500 10 L8 14.500Z M26 28 L19.500 26 L24 21.500Z" fill="#111"/></g>
 <g transform="translate(131,4)" fill="none" stroke="#222"><circle cx="8" cy="8" r="7" fill="#f4f4f4" stroke-width="1.100"/><path d="M3 3 L13 13" stroke-width="1.100"/><path d="M3 3 L6.500 4 L4 6.500Z M13 13 L9.500 12 L12 9.500Z" fill="#222" stroke-width=".5"/></g>
 <g transform="translate(131,29)" fill="none" stroke="#222" stroke-width="1.100"><path d="M1 14.500 L15 14.500 M1 14.500 L10 2"/><path d="M9 6 Q13 9 12.500 14"/><path d="M8 3 L12 5"/></g>
 <g transform="translate(131,54)"><rect x="1" y="8" width="7" height="7" rx="1" fill="#f3b23c" stroke="#8a5a10" stroke-width=".8"/><circle cx="4.500" cy="5.500" r="2.500" fill="#f3b23c" stroke="#8a5a10" stroke-width=".8"/><rect x="9" y="8" width="7" height="7" fill="#f7e27a" stroke="#2a4fa8" stroke-width=".9"/><rect x="2" y="1" width="5" height="4" fill="#cfe0f5" stroke="#2a4fa8" stroke-width=".8"/><path d="M10 1 L15 5 M15 5 L15 2 M15 5 L12 5" stroke="#d22" stroke-width="1" fill="none"/></g>
 <g transform="translate(305,1)"><rect x="13.500" y="1.500" width="11" height="29" fill="#f1ec4e" stroke="#000" stroke-width="2"/><path d="M15 6 L20 6 M15 10 L18 10 M15 14 L20 14 M15 18 L18 18 M15 22 L20 22 M15 26 L18 26" stroke="#000" stroke-width="1.200"/><path d="M1 8 L7 8 L10 11 L7 14 L1 14Z" fill="#f1ec4e" stroke="#000" stroke-width="1.400"/></g>
 <g transform="translate(356,1)"><rect x="1.500" y="2.500" width="27" height="23" fill="#fdfdfd" stroke="#9a9a9a" stroke-width="1.400"/><rect x="1.500" y="2.500" width="27" height="5" fill="#e8e8e8" stroke="#9a9a9a" stroke-width="1"/><rect x="4" y="9" width="22" height="14" fill="url(#gwin)"/><rect x="19" y="17" width="13" height="13" rx="1.500" fill="#2fa03c" stroke="#1b6a24" stroke-width=".8"/><path d="M22 23 Q22.500 19.500 26 19.800 L26 18.300 L29 20.800 L26 23 L26 21.500 Q24 21.500 23.800 23Z M29 24 Q28.500 27.500 25 27.200 L25 28.700 L22 26.200 L25 24 L25 25.500 Q27 25.500 27.200 24Z" fill="#fff"/></g>
 <defs><linearGradient id="gwin" x1="0" y1="0" x2="0" y2="1"><stop offset="0" stop-color="#fff"/><stop offset="1" stop-color="#dcdcdc"/></linearGradient></defs>
</svg>
<div class="rt c" style="letter-spacing:-0.82px;left:941px;top:108px"><u>M</u>echanism</div><div class="rt c" style="letter-spacing:-0.63px;left:941px;top:127px">Mode</div>
<div class="rt c" style="letter-spacing:-1.00px;left:1013px;top:108px"><u>S</u>mart</div><div class="rt c" style="letter-spacing:-0.80px;left:1013px;top:127px">Dimension</div>
<div class="rt" style="letter-spacing:-0.70px;left:1070px;top:73px"><u>D</u>iameter</div>
<div class="rt" style="letter-spacing:-0.63px;left:1070px;top:98px"><u>A</u>ngular</div>
<div class="rt" style="letter-spacing:-0.54px;left:1070px;top:123px"><u>P</u>ositioning Constraints</div>
<div class="rt c" style="letter-spacing:-0.64px;left:1239px;top:108px"><u>U</u>nits</div>
<div class="rt c" style="letter-spacing:-1.20px;left:1291px;top:108px">Recreat<u>e</u></div><div class="rt c" style="letter-spacing:-0.84px;left:1291px;top:127px">Display</div>
<!-- group 4 -->
<svg style="left:1333px;top:72px" width="120" height="68" viewBox="0 0 120 68" fill="none">
 <g stroke="#555" stroke-width="1"><rect x="2.500" y="3.500" width="11" height="12" fill="#fafafa"/><path d="M13.500 1 L15.500 1 L15.500 4" /><rect x="4.500" y="5.500" width="2.500" height="3" /><rect x="9" y="5.500" width="2.500" height="3"/><rect x="4.500" y="10.500" width="2.500" height="3"/><rect x="9" y="10.500" width="2.500" height="3"/></g>
 <g transform="translate(0,25)" stroke="#777" stroke-width="1"><rect x="1.500" y="2.500" width="10" height="12" fill="#d5d5d5" stroke-dasharray="1.500 1"/><path d="M12.500 9 Q15.500 9 15 13 Q14.500 15 12 14.500" stroke="#555"/></g>
 <g transform="translate(0,50)" stroke="#444"><path d="M0 8.500 L6 8.500 M3.500 5.500 L6.500 8.500 L3.500 11.500" stroke-width="1.200"/><rect x="9.500" y="1.500" width="4" height="14" fill="#777" stroke="#555"/><path d="M10.500 4 L12.500 4 M10.500 7 L12.500 7" stroke="#ddd"/></g>
 <g transform="translate(84,0)"><rect x="4.500" y=".5" width="11" height="10" stroke="#666" stroke-dasharray="1.500 1" fill="#eee"/><rect x="1.500" y="5.500" width="11" height="11" rx="1" fill="#666" stroke="#444"/><rect x="4" y="6" width="6" height="4" fill="#e3e3e3"/><rect x="4" y="12" width="6" height="4" fill="#3a3a3a"/><rect x="5" y="13" width="1.500" height="2.500" fill="#ddd"/></g>
 <g transform="translate(84,25)" stroke="#555" stroke-width="1"><rect x="5.500" y="1.500" width="9" height="10" fill="#ddd"/><rect x="3.500" y="3.500" width="9" height="10" fill="#e8e8e8"/><rect x="1.500" y="5.500" width="9" height="10" fill="#fafafa"/><rect x="3" y="7.500" width="2" height="2.500"/><rect x="6.500" y="7.500" width="2" height="2.500"/><rect x="3" y="11.500" width="2" height="2.500"/><rect x="6.500" y="11.500" width="2" height="2.500"/><path d="M14.500 .5 L16 .5 L16 3"/></g>
</svg>
<div class="rt" style="letter-spacing:-1.24px;left:1353px;top:73px"><u>N</u>ew</div>
<div class="rt" style="letter-spacing:-1.22px;left:1353px;top:98px"><u>C</u>lose</div>
<div class="rt" style="letter-spacing:-0.55px;left:1353px;top:123px"><u>A</u>utoHide</div>
<div class="rt" style="letter-spacing:-1.29px;left:1437px;top:73px">Save <u>A</u>s</div>
<div class="rt" style="letter-spacing:-0.91px;left:1437px;top:98px">Ca<u>t</u>alog Sets</div>
<svg style="left:1388px;top:78px" width="110" height="32" viewBox="0 0 110 32"><path d="M1.500 26 L6.500 26 L4 28.500Z M100.500 1 L105.500 1 L103 3.500Z" fill="#555"/></svg>

<style>
#doctabs{left:0;top:172px;width:1681px;height:27px;background:linear-gradient(180deg,#979da6 0,#aeb2ba 35%,#d0d3d7 100%)}
#underrib{left:0;top:169px;width:1920px;height:3px;background:linear-gradient(180deg,#2f2f2f,#4a4a4a 60%,#636363)}
#lp{left:0;top:199px;width:291px;height:854px;background:#dcdcdc;border-left:2px solid #8c8c8c;border-right:1.500px solid #6e6e6e;border-top:1px solid #7c7c7c;box-shadow:inset 4px 3px 0 #f6f6f6}
#lph{left:10px;top:205px;width:277px;height:23px;background:linear-gradient(180deg,#a9a9a9,#b4b4b4);border:1px solid #9a9a9a;font-weight:bold;font-size:15px;color:#3d3d3d;line-height:21px;padding-left:2px;letter-spacing:-0.5px}
#lpt{left:10px;top:228px;width:277px;height:23px;background:#fff;border-left:1px solid #aaa;border-right:1px solid #aaa}
#tree{left:12px;top:251px;width:272px;height:768px;background:#fff;border:1px solid #8a8a8a;overflow:hidden}
.tr{position:absolute;left:0;height:18px;line-height:18px;font-size:15px;white-space:nowrap;color:#111;letter-spacing:-0.3px}
#lpb{left:10px;top:1021px;width:277px;height:28px;background:#515151}
#lpframe{display:none}
.bt{position:absolute;top:1026px;color:#fff;font-size:15px;line-height:20px;letter-spacing:-0.45px}
#rp{left:1681px;top:169px;width:239px;height:882px;background:#515151}
#rph{left:1685px;top:172px;width:235px;height:26px;background:linear-gradient(180deg,#b4b4b4,#a6a6a6);border:1px solid #c8c8c8;border-bottom:none;color:#3f3f3f;font-size:15px;line-height:25px;padding-left:3px;letter-spacing:-0.4px}
#rpt{left:1685px;top:198px;width:235px;height:21px;background:#fff;border:1px solid #9a9a9a}
#rpc{left:1685px;top:219px;width:235px;height:810px;background:#fff;border:1px solid #8d8d8d;border-top:1px solid #777}
.cl{position:absolute;transform:translateX(-50%);font-size:15.5px;line-height:20px;color:#111;white-space:pre}
#status{left:0;top:1054px;width:1920px;height:26px;background:linear-gradient(180deg,#6a6a6a 0,#4c4c4c 2px,#474747 100%)}
.st{position:absolute;top:1059px;color:#e6e6e6;font-size:15px;line-height:18px;white-space:pre;letter-spacing:-0.4px}
</style>

<div id="underrib" class="abs"></div><div id="doctabs" class="abs"></div>
<svg style="left:0;top:170px" width="1681" height="29" viewBox="0 0 1681 29">
<defs><linearGradient id="gtab1" x1="0" y1="0" x2="1" y2="1"><stop offset="0" stop-color="#b7bcc4"/><stop offset="1" stop-color="#7f8692"/></linearGradient></defs>
<path d="M3 28.500 L26 6.500 Q27.500 5.500 30 5.500 L108 5.500 L92 28.500Z" fill="url(#gtab1)" stroke="#e6e8ea" stroke-width="1"/>
<path d="M88 29 L110 6.500 Q111.500 5.500 114 5.500 L308 5.500 Q311 5.500 311 8.500 L311 29Z" fill="#fff" stroke="#f4f4f4" stroke-width="1"/>
<path d="M0 28.500 L1681 28.500" stroke="#f0f0f0" stroke-width="1"/>
<path d="M294.500 13 L302 20.500 M302 13 L294.500 20.500" stroke="#222" stroke-width="1.300"/>
<path d="M1663 13.500 L1673 13.500 L1668 18.500Z" fill="#444"/>
</svg>
<div class="abs" style="letter-spacing:-1.34px;left:40px;top:177px;font-size:15px;line-height:18px;color:#222">Scene1:1</div>
<div class="abs" style="letter-spacing:-0.73px;left:127.500px;top:177px;font-size:15px;line-height:18px;color:#000;font-weight:bold;white-space:nowrap">2C87140 FIXT...CAST*:1</div>
<div id="lp" class="abs"></div><div id="lpframe" class="abs"></div><div id="lph" class="abs"><span style="letter-spacing:-1.38px;">Scene</span></div><div id="lpt" class="abs"></div>
<svg style="left:240px;top:205px" width="50" height="46" viewBox="0 0 50 46">
<path d="M34.500 7.500 L41.500 14.500 M41.500 7.500 L34.500 14.500" stroke="#555" stroke-width="1.300"/>
<rect x="5.500" y="26.500" width="17" height="17" rx="2" fill="#efe9e4" stroke="#8a8a8a"/><path d="M8 29 L20 41 M20 29 L8 41" stroke="#d32a2a" stroke-width="1.800"/>
<g transform="translate(25,26)"><rect x="0" y="0" width="19" height="19" fill="#f4efe2"/><path d="M4.500 1 L4.500 8 M1 4.500 L8 4.500 M2 2 L7 7 M7 2 L2 7" stroke="#eeb100" stroke-width="1.100"/><g fill="none" stroke="#4a90d0" stroke-width="1"><rect x="10.500" y="1.500" width="3" height="3"/><rect x="8.500" y="7.500" width="3" height="3"/><rect x="13" y="7.500" width="3" height="3"/><rect x="6" y="13.500" width="3" height="3"/><rect x="10.500" y="13.500" width="3" height="3"/><rect x="15" y="13.500" width="3" height="3"/><path d="M12 4.500 L10 7.500 M12 4.500 L14.500 7.500 M10 10.500 L7.500 13.500 M10 10.500 L12 13.500 M14.500 10.500 L16.500 13.500"/></g></g>
</svg>
<div id="tree" class="abs">
<svg style="left:0;top:0" width="250" height="768" viewBox="0 0 250 768"><defs><linearGradient id="gpf" x1="0" y1="0" x2="1" y2="1"><stop offset="0" stop-color="#7fbdf6"/><stop offset=".5" stop-color="#2f7fd8"/><stop offset="1" stop-color="#2a6fc8"/></linearGradient><linearGradient id="gex" x1="0" y1="0" x2="0" y2="1"><stop offset="0" stop-color="#fff"/><stop offset="1" stop-color="#d9dce3"/></linearGradient><g id="pi" stroke="#06143f" stroke-width="1" stroke-linejoin="round"><path d="M.5 8.500 L4.500 5.500 L13.500 5.500 L13.500 10.500 L9 14.500 L.5 14.500Z" fill="#1d5fb5"/><path d="M.5 8.500 L9 8.500 L9 14.500 L.5 14.500Z" fill="url(#gpf)"/><path d="M.5 8.500 L4.500 5.500 L13.500 5.500 L9 8.500Z" fill="#4f9be8"/><path d="M3.500 3.500 L6.500 1 L12.500 1 L12.500 5 L9.500 7.500 L3.500 7.500Z" fill="#1d5fb5"/><path d="M3.500 3.500 L9.500 3.500 L9.500 7.500 L3.500 7.500Z" fill="url(#gpf)"/><path d="M3.500 3.500 L6.500 1 L12.500 1 L9.500 3.500Z" fill="#5aa6f0"/><path d="M2 10.500 L7.500 10.500 L7.500 13 L2 13Z" fill="#9fd0fa" stroke="none" opacity=".7"/></g><g id="ex"><path d="M11 5.500 L17 5.500" stroke="#9a9a9a" stroke-dasharray="1 1" fill="none"/><rect x=".5" y=".5" width="10" height="10" rx="1.500" fill="url(#gex)" stroke="#8e9096"/><path d="M3 5.500 L8 5.500 M5.500 3 L5.500 8" stroke="#2b3b7c" stroke-width="1" fill="none"/></g></defs><path d="M13.500 18 L13.500 768" stroke="#8a8a8a" stroke-width="1" stroke-dasharray="2 1"/><g transform="translate(5,2)"><path d="M1 5 L6 7 L10 5 L15 7 L15 11 L8 14 L1 11Z" fill="#d61a1a"/><path d="M3 3 L7 6 M13 3 L10 6 M8 0 L8 4" stroke="#d61a1a" stroke-width="1.600"/><path d="M4 8.500 L8 10 L12 8.500 L8 7Z" fill="#8a0d0d"/><path d="M8 14 L8 17" stroke="#d61a1a" stroke-dasharray="1 1"/></g><use href="#ex" x="8" y="23"/><g transform="translate(24,20)" fill="none" stroke="#222" stroke-width="1.400"><path d="M5 2 L5 12 L15 12"/><path d="M2.500 5 L5 1.500 L7.500 5 M12 9.500 L15.500 12 L12 14.500"/><path d="M5 12 L1.500 15" /></g><use href="#ex" x="8" y="41"/><use href="#pi" x="25" y="37.5"/><g transform="translate(42,38)"><path d="M3 13 L11 5" stroke="#555" stroke-width="2.200"/><path d="M9 3 L13 1 L16 4 L14 8 L11 8 L9 6Z" fill="#d9dde3" stroke="#555" stroke-width=".9"/><circle cx="4" cy="12.500" r="3" fill="#1f8a7a" stroke="#0c4a40" stroke-width=".8"/></g><use href="#ex" x="8" y="59"/><use href="#pi" x="25" y="55.5"/><use href="#ex" x="8" y="77"/><use href="#pi" x="25" y="73.5"/><use href="#ex" x="8" y="95"/><use href="#pi" x="25" y="91.5"/><use href="#ex" x="8" y="113"/><use href="#pi" x="25" y="109.5"/><use href="#ex" x="8" y="131"/><use href="#pi" x="25" y="127.5"/><use href="#ex" x="8" y="149"/><use href="#pi" x="25" y="145.5"/><use href="#ex" x="8" y="167"/><use href="#pi" x="25" y="163.5"/><use href="#ex" x="8" y="185"/><use href="#pi" x="25" y="181.5"/><use href="#ex" x="8" y="203"/><use href="#pi" x="25" y="199.5"/><use href="#ex" x="8" y="221"/><use href="#pi" x="25" y="217.5"/><use href="#ex" x="8" y="239"/><use href="#pi" x="25" y="235.5"/><use href="#ex" x="8" y="257"/><use href="#pi" x="25" y="253.5"/><use href="#ex" x="8" y="275"/><use href="#pi" x="25" y="271.5"/><use href="#ex" x="8" y="293"/><use href="#pi" x="25" y="289.5"/><use href="#ex" x="8" y="311"/><use href="#pi" x="25" y="307.5"/><use href="#ex" x="8" y="329"/><use href="#pi" x="25" y="325.5"/><use href="#ex" x="8" y="347"/><use href="#pi" x="25" y="343.5"/><use href="#ex" x="8" y="365"/><use href="#pi" x="25" y="361.5"/><use href="#ex" x="8" y="383"/><use href="#pi" x="25" y="379.5"/><use href="#ex" x="8" y="401"/><use href="#pi" x="25" y="397.5"/><use href="#ex" x="8" y="419"/><use href="#pi" x="25" y="415.5"/><use href="#ex" x="8" y="437"/><use href="#pi" x="25" y="433.5"/><use href="#ex" x="8" y="455"/><use href="#pi" x="25" y="451.5"/><use href="#ex" x="8" y="473"/><use href="#pi" x="25" y="469.5"/><use href="#ex" x="8" y="491"/><use href="#pi" x="25" y="487.5"/><use href="#ex" x="8" y="509"/><use href="#pi" x="25" y="505.5"/><use href="#ex" x="8" y="527"/><use href="#pi" x="25" y="523.5"/><use href="#ex" x="8" y="545"/><use href="#pi" x="25" y="541.5"/><use href="#ex" x="8" y="563"/><use href="#pi" x="25" y="559.5"/><use href="#ex" x="8" y="581"/><use href="#pi" x="25" y="577.5"/><use href="#ex" x="8" y="599"/><use href="#pi" x="25" y="595.5"/><use href="#ex" x="8" y="617"/><use href="#pi" x="25" y="613.5"/><use href="#ex" x="8" y="635"/><use href="#pi" x="25" y="631.5"/><use href="#ex" x="8" y="653"/><use href="#pi" x="25" y="649.5"/><use href="#ex" x="8" y="671"/><use href="#pi" x="25" y="667.5"/><use href="#ex" x="8" y="689"/><use href="#pi" x="25" y="685.5"/><use href="#ex" x="8" y="707"/><use href="#pi" x="25" y="703.5"/><use href="#ex" x="8" y="725"/><use href="#pi" x="25" y="721.5"/><use href="#ex" x="8" y="743"/><use href="#pi" x="25" y="739.5"/></svg>
<div class="tr" style="letter-spacing:0.32px;left:26px;top:1px">X:\Applications\Admin\Marketing</div>
<div class="tr" style="letter-spacing:-0.14px;left:45px;top:19px">Global Coordinate System</div>
<div class="tr" style="letter-spacing:-0.32px;left:61px;top:37px">R-PC-13300300-12-6</div>
<div class="tr" style="letter-spacing:-0.32px;left:45px;top:55px">R-S-1925-6</div>
<div class="tr" style="letter-spacing:-0.32px;left:45px;top:73px">R-S-1925-6</div>
<div class="tr" style="letter-spacing:-0.32px;left:45px;top:91px">R-S-1350-6</div>
<div class="tr" style="letter-spacing:-0.32px;left:45px;top:109px">R-S-1310-6</div>
<div class="tr" style="letter-spacing:-0.32px;left:45px;top:127px">R-S-1350-6</div>
<div class="tr" style="letter-spacing:-0.32px;left:45px;top:145px">R-S-1350-6</div>
<div class="tr" style="letter-spacing:-0.32px;left:45px;top:163px">R-S-1350-6</div>
<div class="tr" style="letter-spacing:-0.32px;left:45px;top:181px">R-S-1925-6</div>
<div class="tr" style="letter-spacing:-0.32px;left:45px;top:199px">R-S-1925-6</div>
<div class="tr" style="letter-spacing:-0.32px;left:45px;top:217px">R-S-1350-6</div>
<div class="tr" style="letter-spacing:-0.32px;left:45px;top:235px">R-S-1350-6</div>
<div class="tr" style="letter-spacing:-0.32px;left:45px;top:253px">R-S-1310-6</div>
<div class="tr" style="letter-spacing:-0.32px;left:45px;top:271px">R-S-1350-6</div>
<div class="tr" style="letter-spacing:-0.32px;left:45px;top:289px">R-S-1310-6</div>
<div class="tr" style="letter-spacing:-0.32px;left:45px;top:307px">R-S-1925-6</div>
<div class="tr" style="letter-spacing:-0.32px;left:45px;top:325px">R-S-1925-6</div>
<div class="tr" style="letter-spacing:-0.32px;left:45px;top:343px">R-S-1350-6</div>
<div class="tr" style="letter-spacing:-0.32px;left:45px;top:361px">R-S-1350-6</div>
<div class="tr" style="letter-spacing:-0.32px;left:45px;top:379px">R-S-1350-6</div>
<div class="tr" style="letter-spacing:-0.32px;left:45px;top:397px">R-S-1310-6</div>
<div class="tr" style="letter-spacing:-0.32px;left:45px;top:415px">R-S-1925-6</div>
<div class="tr" style="letter-spacing:-0.32px;left:45px;top:433px">R-S-1925-6</div>
<div class="tr" style="letter-spacing:-0.32px;left:45px;top:451px">R-S-1350-6</div>
<div class="tr" style="letter-spacing:-0.32px;left:45px;top:469px">R-S-1350-6</div>
<div class="tr" style="letter-spacing:-0.32px;left:45px;top:487px">R-S-910-6</div>
<div class="tr" style="letter-spacing:-0.32px;left:45px;top:505px">R-S-910-6</div>
<div class="tr" style="letter-spacing:-0.96px;left:45px;top:523px">R-RPS-6</div>
<div class="tr" style="letter-spacing:-0.96px;left:45px;top:541px">R-RPS-6</div>
<div class="tr" style="letter-spacing:-0.96px;left:45px;top:559px">R-RPS-6</div>
<div class="tr" style="letter-spacing:-0.96px;left:45px;top:577px">R-RPS-6</div>
<div class="tr" style="letter-spacing:-0.96px;left:45px;top:595px">R-RPS-6</div>
<div class="tr" style="letter-spacing:-0.96px;left:45px;top:613px">R-RPS-6</div>
<div class="tr" style="letter-spacing:-0.01px;left:45px;top:631px">R-M-19-6</div>
<div class="tr" style="letter-spacing:-0.01px;left:45px;top:649px">R-M-19-6</div>
<div class="tr" style="letter-spacing:-0.01px;left:45px;top:667px">R-M-19-6</div>
<div class="tr" style="letter-spacing:-0.01px;left:45px;top:685px">R-M-19-6</div>
<div class="tr" style="letter-spacing:-0.01px;left:45px;top:703px">R-M-19-6</div>
<div class="tr" style="letter-spacing:-0.01px;left:45px;top:721px">R-M-19-6</div>
<div class="tr" style="letter-spacing:-0.01px;left:45px;top:739px">R-M-19-6</div>
<div style="position:absolute;left:249px;top:0;width:21px;height:746px;background:#f0f0f0"></div>
<div style="position:absolute;left:251px;top:22px;width:17px;height:535px;border:1px solid #979797;border-radius:2px;background:linear-gradient(90deg,#f4f4f4 0,#e2e2e2 45%,#cfcfcf 50%,#dadada 100%)"></div>
<svg style="left:249px;top:0" width="22" height="746" viewBox="0 0 22 746"><path d="M6 13 L14 13 L10 9Z M6 733 L14 733 L10 737Z" fill="#444"/><path d="M7 286.500 L15 286.500 M7 289.500 L15 289.500 M7 292.500 L15 292.500" stroke="#6a6a6a"/></svg>
<div style="position:absolute;left:0;top:746px;width:271px;height:21px;background:#f0f0f0"></div>
<div style="position:absolute;left:24px;top:748px;width:53px;height:17px;border:1px solid #979797;border-radius:2px;background:linear-gradient(180deg,#f4f4f4 0,#e2e2e2 45%,#cfcfcf 50%,#dadada 100%)"></div>
<svg style="left:0;top:746px" width="271" height="21" viewBox="0 0 271 21"><path d="M13 6 L13 15 L8.500 10.500Z M236 6 L236 15 L240.500 10.500Z" fill="#444"/><path d="M46.500 7 L46.500 14 M49.500 7 L49.500 14 M52.500 7 L52.500 14" stroke="#6a6a6a"/></svg>

</div>
<div id="lpb" class="abs"></div>
<div class="abs" style="left:13px;top:1023px;width:64px;height:24px;border-radius:3px;background:linear-gradient(180deg,#dfe2e6,#eef3f3);border:1px solid #f4fbfb"></div>
<svg style="left:14px;top:1024px" width="200" height="22" viewBox="0 0 200 22">
<g transform="translate(1,1)"><rect x="0" y="0" width="16" height="19" fill="#f1ecd9" opacity=".6"/><g fill="none" stroke="#3f7fc4" stroke-width="1"><rect x="6.500" y="1.500" width="3" height="3"/><rect x="4" y="7.500" width="3" height="3"/><rect x="9" y="7.500" width="3" height="3"/><rect x="1.500" y="13.500" width="3" height="3"/><rect x="6.500" y="13.500" width="3" height="3"/><rect x="11.500" y="13.500" width="3" height="3"/><path d="M8 4.500 L5.500 7.500 M8 4.500 L10.500 7.500 M5.500 10.500 L3 13.500 M5.500 10.500 L8 13.500 M10.500 10.500 L13 13.500"/></g></g>
<g transform="translate(70,0)"><rect x=".5" y=".5" width="15" height="17" fill="#f4f4f4" stroke="#333"/><rect x="3" y="3" width="9" height="6" fill="#3a6fc0" stroke="#223" stroke-width=".6"/><path d="M4 13.500 L10 13.500 M4 13.500 L6 11.500 M4 13.500 L6 15.500" stroke="#333" fill="none"/></g>
<g transform="translate(165,0)"><rect x="0" y="0" width="17" height="17" fill="#e9e6d8"/><circle cx="7" cy="7" r="5" fill="#cfe4f7" stroke="#5580b0" stroke-width="1.400"/><path d="M10.500 10.500 L15.500 15.500" stroke="#c8922a" stroke-width="2.600"/></g>
</svg>
<div class="bt" style="letter-spacing:-1.65px;left:38px;color:#1a1a1a">Scene</div><div class="bt" style="letter-spacing:-0.67px;left:106px">Properties</div><div class="bt" style="letter-spacing:-1.31px;left:201px">Search</div>
<div id="rp" class="abs"></div>
<div id="rph" class="abs"><span style="letter-spacing:-0.76px;">Catalog Browser</span></div>
<div id="rpt" class="abs"></div>
<div id="rpc" class="abs"></div>
<svg style="left:1685px;top:174px" width="235" height="46" viewBox="0 0 235 46">
 <path d="M201.500 6 L207.500 6 M202.500 6 L202.500 12 L206.500 12 L206.500 6 M200.500 12.500 L208.500 12.500 M204.500 12.500 L204.500 17" stroke="#444" stroke-width="1.100" fill="none"/>
 <path d="M220.500 7.500 L227.500 14.500 M227.500 7.500 L220.500 14.500" stroke="#444" stroke-width="1.300"/>
 <rect x="1.500" y="25.500" width="18" height="17" rx="2" fill="#9c9c9c" stroke="#7d7d7d"/><path d="M4 34 L10 28.500 L10 32 L17 32 L17 36 L10 36 L10 39.500Z" fill="#555"/>
 <rect x="216.500" y="25.500" width="17" height="17" rx="2" fill="#efe9e4" stroke="#8a8a8a"/><path d="M219 28 L231 40 M231 28 L219 40" stroke="#d32a2a" stroke-width="1.800"/>
</svg>
<!-- catalog items -->
<svg style="left:1685px;top:219px" width="235" height="470" viewBox="1685 219 235 470">
 <defs>
  <linearGradient id="gmet" x1="0" y1="0" x2="1" y2="0"><stop offset="0" stop-color="#555"/><stop offset=".5" stop-color="#8a8a8a"/><stop offset="1" stop-color="#4a4a4a"/></linearGradient>
  <linearGradient id="gblk" x1="0" y1="0" x2="1" y2="0"><stop offset="0" stop-color="#111"/><stop offset=".45" stop-color="#3d3d3d"/><stop offset="1" stop-color="#0b0b0b"/></linearGradient>
 </defs>
 <!-- adjustables -->
 <g><path d="M1714 238 L1732 229 L1761 245 L1761 253 L1747 262 L1714 246Z" fill="#5a5a5a"/><path d="M1714 238 L1732 229 L1761 245 L1746 254Z" fill="#3e3e3e"/><path d="M1714 238 L1746 254 L1747 262 L1714 246Z" fill="#7a7a7a"/><path d="M1724 238 L1730 235 L1748 245 L1742 248Z" fill="#c9c9c9"/><ellipse cx="1752" cy="248.500" rx="4" ry="2" fill="#bbb"/></g>
 <!-- clamps -->
 <g><rect x="1823" y="230" width="7" height="34" rx="2" fill="#c4c8cf"/><ellipse cx="1826.500" cy="231" rx="4.500" ry="2.500" fill="#8d9096"/><rect x="1822" y="255" width="9" height="6" fill="#aeb2b8"/><path d="M1821 240 L1832 238 L1858 265 L1852 268 L1822 251Z" fill="#d98a2b"/><path d="M1821 240 L1832 238 L1832 249 L1822 251Z" fill="#e9a444"/></g>
 <!-- fasteners -->
 <g><rect x="1731" y="345" width="11" height="22" rx="2" fill="url(#gmet)"/><ellipse cx="1737" cy="346" rx="13" ry="5.500" fill="#c9c9c9"/><rect x="1728" y="332" width="18" height="13" rx="3" fill="url(#gmet)"/><ellipse cx="1737" cy="333" rx="8" ry="3.500" fill="#3a3a3a"/></g>
 <!-- magnets -->
 <g><path d="M1827 336 L1852 336 L1852 364 Q1840 374 1827 364Z" fill="url(#gblk)"/><path d="M1827 337 Q1828 326 1838 326 Q1849 328 1852 337 Q1840 345 1827 337Z" fill="#f0b21c" stroke="#1a1a1a" stroke-width="1.500"/><path d="M1831 336 Q1833 330 1839 330 Q1846 331 1848 336 Q1840 340 1831 336Z" fill="#e58a12"/></g>
 <!-- misc -->
 <g><path d="M1737 432 L1755 456 Q1756 462 1745 464 L1728 464 Q1718 462 1720 456Z" fill="#7d7d7d"/><path d="M1737 432 L1742 464 L1728 464 Q1718 462 1720 456Z" fill="#9a9a9a"/><path d="M1737 434 L1741 462 L1733 462Z" fill="#d0d0d0"/><rect x="1733" y="463" width="8" height="3" fill="#666"/></g>
 <!-- plates -->
 <g><path d="M1819 451 L1840 438 L1860 450 L1839 463Z" fill="#9aa0a8"/><path d="M1819 451 L1839 463 L1839 466 L1819 454Z" fill="#6f757d"/><path d="M1839 463 L1860 450 L1860 453 L1839 466Z" fill="#80868e"/><path d="M1824 451 L1840 441.500 L1855 450 L1839 460Z" fill="none" stroke="#6d737b" stroke-width="1" stroke-dasharray="1 1.500"/><path d="M1827 451 L1840 444 L1852 450 L1839 457.500Z" fill="none" stroke="#6d737b" stroke-width="1" stroke-dasharray="1 1.500"/><path d="M1831 451 L1840 446.500 L1848 450 L1839 454.500Z" fill="none" stroke="#6d737b" stroke-width="1" stroke-dasharray="1 1.500"/></g>
 <!-- standoffs -->
 <g><path d="M1725 537 L1750 537 L1750 568 Q1737 577 1725 568Z" fill="url(#gblk)"/><ellipse cx="1737.500" cy="537" rx="12.500" ry="5.500" fill="#1a1a1a"/><path d="M1733 534.500 L1741 534.500" stroke="#777" stroke-width=".8"/></g>
 <!-- suction cups -->
 <g><path d="M1826 554 L1849 554 L1849 568 Q1837 575 1826 568Z" fill="url(#gblk)"/><ellipse cx="1837.500" cy="554" rx="11.500" ry="4.500" fill="#2a2a2a"/><rect x="1833" y="546" width="9" height="8" fill="#3a3a30"/><rect x="1833" y="549" width="9" height="2" fill="#c9c030"/><ellipse cx="1837" cy="541" rx="9" ry="7" fill="#8a8a8a"/><ellipse cx="1835" cy="538" rx="4" ry="2.500" fill="#e6e6e6"/><rect x="1847" y="560" width="7" height="6" rx="2" fill="#b9b9b9"/></g>
 <!-- towers -->
 <g><path d="M1723 661 L1732 657 L1753 668 L1744 672Z" fill="#5e5e5e"/><path d="M1723 661 L1744 672 L1744 674 L1723 663Z" fill="#444"/><path d="M1731 637 L1737 634 L1744 637 L1744 668 L1738 671 L1731 667Z" fill="#a8a8a8"/><path d="M1731 637 L1738 640 L1738 671 L1731 667Z" fill="#c6c6c6"/><path d="M1734.500 642 L1734.500 666 M1741 642 L1741 666" stroke="#777" stroke-width="1.200" stroke-dasharray="1 3"/></g>
 <!-- help -->
 <g><rect x="1816" y="630" width="48" height="48" fill="#f59331"/><path d="M1819 664 L1840 654 L1862 664 L1840 676Z" fill="#fff"/><g fill="#f59331" stroke="#fff" stroke-width="1.300"><rect x="1828.500" y="655" width="5" height="13" rx="2.500"/><rect x="1836.500" y="659" width="5" height="13" rx="2.500"/><rect x="1846.500" y="655" width="5" height="13" rx="2.500"/></g><path d="M1825 646 L1840 640 L1856 646 L1840 653Z" fill="#fff"/><path d="M1825 646 L1840 653 L1840 661 L1825 654Z" fill="#fbd3ad"/><path d="M1840 653 L1856 646 L1856 654 L1840 661Z" fill="#fde6d0"/></g>
</svg>
<div class="cl" style="letter-spacing:-1.47px;left:1737.9px;top:274.2px">ADJUSTABLES</div>
<div class="cl" style="letter-spacing:-0.72px;left:1739.4px;top:293.8px">M6</div>
<div class="cl" style="letter-spacing:-0.98px;left:1839.8px;top:274.2px">CLAMPS  M6</div>
<div class="cl" style="letter-spacing:-1.80px;left:1737.5px;top:376.0px">FASTENERS</div>
<div class="cl" style="letter-spacing:-0.72px;left:1737.5px;top:396.0px">M6</div>
<div class="cl" style="letter-spacing:-0.96px;left:1839.7px;top:376.0px">MAGNETS  M6</div>
<div class="cl" style="letter-spacing:-0.90px;left:1737.9px;top:478.0px">MISC.  M6</div>
<div class="cl" style="letter-spacing:-1.14px;left:1840px;top:478.0px">PLATES  M6</div>
<div class="cl" style="letter-spacing:-1.41px;left:1737.6px;top:580.0px">STANDOFFS</div>
<div class="cl" style="letter-spacing:-0.72px;left:1737.6px;top:600.0px">M6</div>
<div class="cl" style="letter-spacing:-1.42px;left:1839.4px;top:580.0px">SUCTION</div>
<div class="cl" style="letter-spacing:-1.19px;left:1839.9px;top:600.0px">CUPS  M6</div>
<div class="cl" style="letter-spacing:-1.20px;left:1737.9px;top:682.0px">TOWERS  M6</div>
<div class="cl" style="letter-spacing:-0.38px;left:1839.3px;top:682.0px">FixtureBuilder</div>
<div class="cl" style="letter-spacing:-0.27px;left:1839.2px;top:702.0px">Help</div>
<!-- bottom tabs of catalog -->
<div class="abs" style="left:1723px;top:1029px;width:29px;height:22px;border-radius:0 0 4px 4px;background:linear-gradient(180deg,#d9dce0,#e8efef);border:1px solid #eef4f4;border-top:none"></div>
<div class="abs" style="letter-spacing:-0.47px;left:1693.7px;top:1031px;color:#f2f2f2;font-size:15px;line-height:18px">M8</div>
<div class="abs" style="letter-spacing:-0.47px;left:1727.9px;top:1031px;color:#1a1a1a;font-size:15px;line-height:18px">M6</div>
<div class="abs" style="letter-spacing:-0.47px;left:1761.6px;top:1031px;color:#f2f2f2;font-size:15px;line-height:18px">M4</div>
<div class="abs" style="letter-spacing:-0.75px;left:1795.3px;top:1031px;color:#f2f2f2;font-size:15px;line-height:18px">Tools</div>
<svg style="left:1900px;top:1036px" width="14" height="10" viewBox="0 0 14 10"><path d="M2 3 L12 3 L7 8Z" fill="#5f5f5f"/></svg>
<!-- status bar -->
<div id="status" class="abs"></div>
<div class="abs" style="left:0;top:1054px;width:1145px;height:26px;background:#2e2e2e;border-top:1px solid #3a3a3a"></div>
<div class="abs" style="left:1145px;top:1054px;width:2px;height:26px;background:#1c1c1c"></div>
<div class="st" style="letter-spacing:-0.49px;left:4px;top:1059px;color:#8d8d8d;text-decoration:underline">http://www.ironcad.com</div>
<div class="st" style="letter-spacing:-0.66px;left:1160.300px">View size: 1679 x  854</div>
<div class="st" style="letter-spacing:-0.68px;left:1314.700px">Units: mm, deg</div>
<div class="abs" style="left:1416px;top:1057px;width:222px;height:23px;border-radius:3px;background:linear-gradient(180deg,#cfd3d9,#e6eaec);border:1px solid #f0f4f4"></div>
<div class="abs" style="left:1636px;top:1057px;width:31px;height:23px;border-radius:3px;background:linear-gradient(180deg,#f3c879,#f7d89a);border:1px solid #e8a94a"></div>
<div class="abs" style="left:1669px;top:1057px;width:69px;height:23px;border-radius:3px;background:linear-gradient(180deg,#cfd3d9,#e6eaec);border:1px solid #f0f4f4"></div>
<div class="abs" style="left:1691px;top:1058px;width:23px;height:22px;background:linear-gradient(180deg,#f3c879,#f7d89a)"></div>
<div class="abs" style="left:1740px;top:1057px;width:88px;height:23px;background:linear-gradient(180deg,#d6dade,#e9eded);border:1px solid #f0f4f4;border-radius:2px"></div>
<div class="abs" style="left:1830px;top:1057px;width:64px;height:23px;background:linear-gradient(180deg,#d6dade,#e9eded);border:1px solid #f0f4f4;border-radius:2px"></div>
<div class="abs" style="left:1895px;top:1057px;width:24px;height:23px;background:linear-gradient(180deg,#d6dade,#e9eded);border:1px solid #f0f4f4;border-radius:2px"></div>
<div class="st" style="letter-spacing:-0.89px;left:1742.500px;top:1060px;color:#111;font-size:15px">Any</div>
<div class="st" style="letter-spacing:-0.75px;left:1833px;top:1060px;color:#111;font-size:15px">Default</div>
<svg style="left:1416px;top:1057.500px" width="504" height="24" viewBox="1416 1056 504 24">
 <g fill="none" stroke="#333" stroke-width="1.300"><rect x="1421.500" y="1060.500" width="6" height="8" fill="#fff" stroke-width="1"/><circle cx="1426" cy="1066" r="5.500" fill="rgba(255,255,255,.5)"/><path d="M1430 1070 L1435 1076" stroke-width="2.400"/>
 <circle cx="1448" cy="1066" r="5.500" fill="rgba(255,255,255,.5)"/><rect x="1445.500" y="1063.500" width="5" height="5" stroke-width="1"/><path d="M1452 1070 L1457 1076" stroke-width="2.400"/></g>
 <g fill="#444"><path d="M1469 1067 L1475 1067 L1472 1070Z M1500 1067 L1506 1067 L1503 1070Z M1535 1067 L1541 1067 L1538 1070Z M1570 1067 L1576 1067 L1573 1070Z M1624 1067 L1630 1067 L1627 1070Z M1657 1067 L1663 1067 L1660 1070Z M1814 1065 L1822 1065 L1818 1069Z M1880 1065 L1888 1065 L1884 1069Z"/></g>
 <g><path d="M1478 1065 L1482 1061 L1491 1061 L1491 1069 L1487 1073 L1478 1073Z" fill="#f6df5a" stroke="#111" stroke-width="1.200"/><path d="M1478 1065 L1487 1065 L1487 1073 M1487 1065 L1491 1061" fill="none" stroke="#111" stroke-width="1.200"/><path d="M1493 1061 L1493 1067 M1490 1064 L1496 1064" stroke="#d22" stroke-width="1.500"/></g>
 <g><path d="M1511 1064 L1517 1059 L1530 1059 L1530 1070 L1524 1076 L1511 1076Z" fill="#4a80c8" stroke="#1e3f7a" stroke-width="1"/><path d="M1511 1064 L1517 1059 L1530 1059 L1524 1064Z" fill="#cfe0f5" stroke="#1e3f7a" stroke-width="1"/><path d="M1524 1064 L1530 1059 L1530 1070 L1524 1076Z" fill="#7aa6de" stroke="#1e3f7a" stroke-width="1"/></g>
 <g fill="none" stroke="#333" stroke-width="1.100"><rect x="1553.500" y="1066.500" width="9" height="9" fill="#eee"/><rect x="1555.500" y="1071" width="5" height="4.500" fill="#777"/><path d="M1546 1068 L1551 1068 M1548 1066 L1546 1068 L1548 1070" /><path d="M1552 1063 L1562 1063 M1557 1060 L1557 1064" stroke="#3a6fc0" stroke-width="1.500"/></g>
 <g transform="translate(-9,0)"><path d="M1588 1068 L1600 1060 L1611 1060 L1599 1068Z" fill="#cfe0f5" stroke="#1e3f7a"/><path d="M1588 1068 L1599 1068 L1596 1077 L1588 1077Z" fill="#4a80c8" stroke="#1e3f7a"/><path d="M1599 1068 L1611 1060 L1607 1069 L1596 1077Z" fill="#6f9fdb" stroke="#1e3f7a"/></g>
 <g fill="none" stroke="#27518f" stroke-width="1.500"><circle cx="1609.500" cy="1070" r="3.500"/><circle cx="1618.500" cy="1070" r="3.500"/><path d="M1606 1068 L1607 1061 M1622 1068 L1624 1063"/></g>
 <g><path d="M1639 1064 L1644 1060 L1654 1060 L1654 1071 L1649 1075 L1639 1075Z" fill="#a9c4ea" stroke="#1e3f7a" stroke-width="1.200"/><path d="M1639 1064 L1649 1064 L1649 1075 M1649 1064 L1654 1060" fill="none" stroke="#1e3f7a" stroke-width="1.200"/></g>
 <g><path d="M1673 1064 L1680 1061 L1687 1064 L1687 1071 L1673 1071Z" fill="#777" stroke="#555"/><path d="M1681 1066 L1681 1077 L1684 1074 L1686 1078 L1688 1077 L1686 1073 L1690 1073Z" fill="#fff" stroke="#111" stroke-width=".9"/></g>
 <path d="M1698 1060 L1698 1074 L1701.500 1070.500 L1704 1076 L1706.500 1075 L1704 1069.500 L1709 1069.500Z" fill="#fff" stroke="#000" stroke-width="1"/>
 <g><rect x="1719" y="1061" width="9" height="6" fill="#fff" stroke="#999" stroke-width=".6"/><path d="M1726 1064 L1726 1075 L1729 1072 L1731 1076 L1733 1075 L1731 1071 L1735 1071Z" fill="#fff" stroke="#111" stroke-width=".9"/></g>
 <g><rect x="1902" y="1059" width="8" height="6" fill="#d8262c" stroke="#7a1418" stroke-width=".8"/><path d="M1906 1065 L1906 1068 M1899 1071 L1899 1068 L1913 1068 L1913 1071" fill="none" stroke="#2a4fa8" stroke-width="1.200"/><rect x="1895.500" y="1071.500" width="7" height="5" fill="#fff" stroke="#2a4fa8" stroke-width="1.200"/><rect x="1909.500" y="1071.500" width="7" height="5" fill="#fff" stroke="#2a4fa8" stroke-width="1.200"/></g>
</svg>

</body></html>
